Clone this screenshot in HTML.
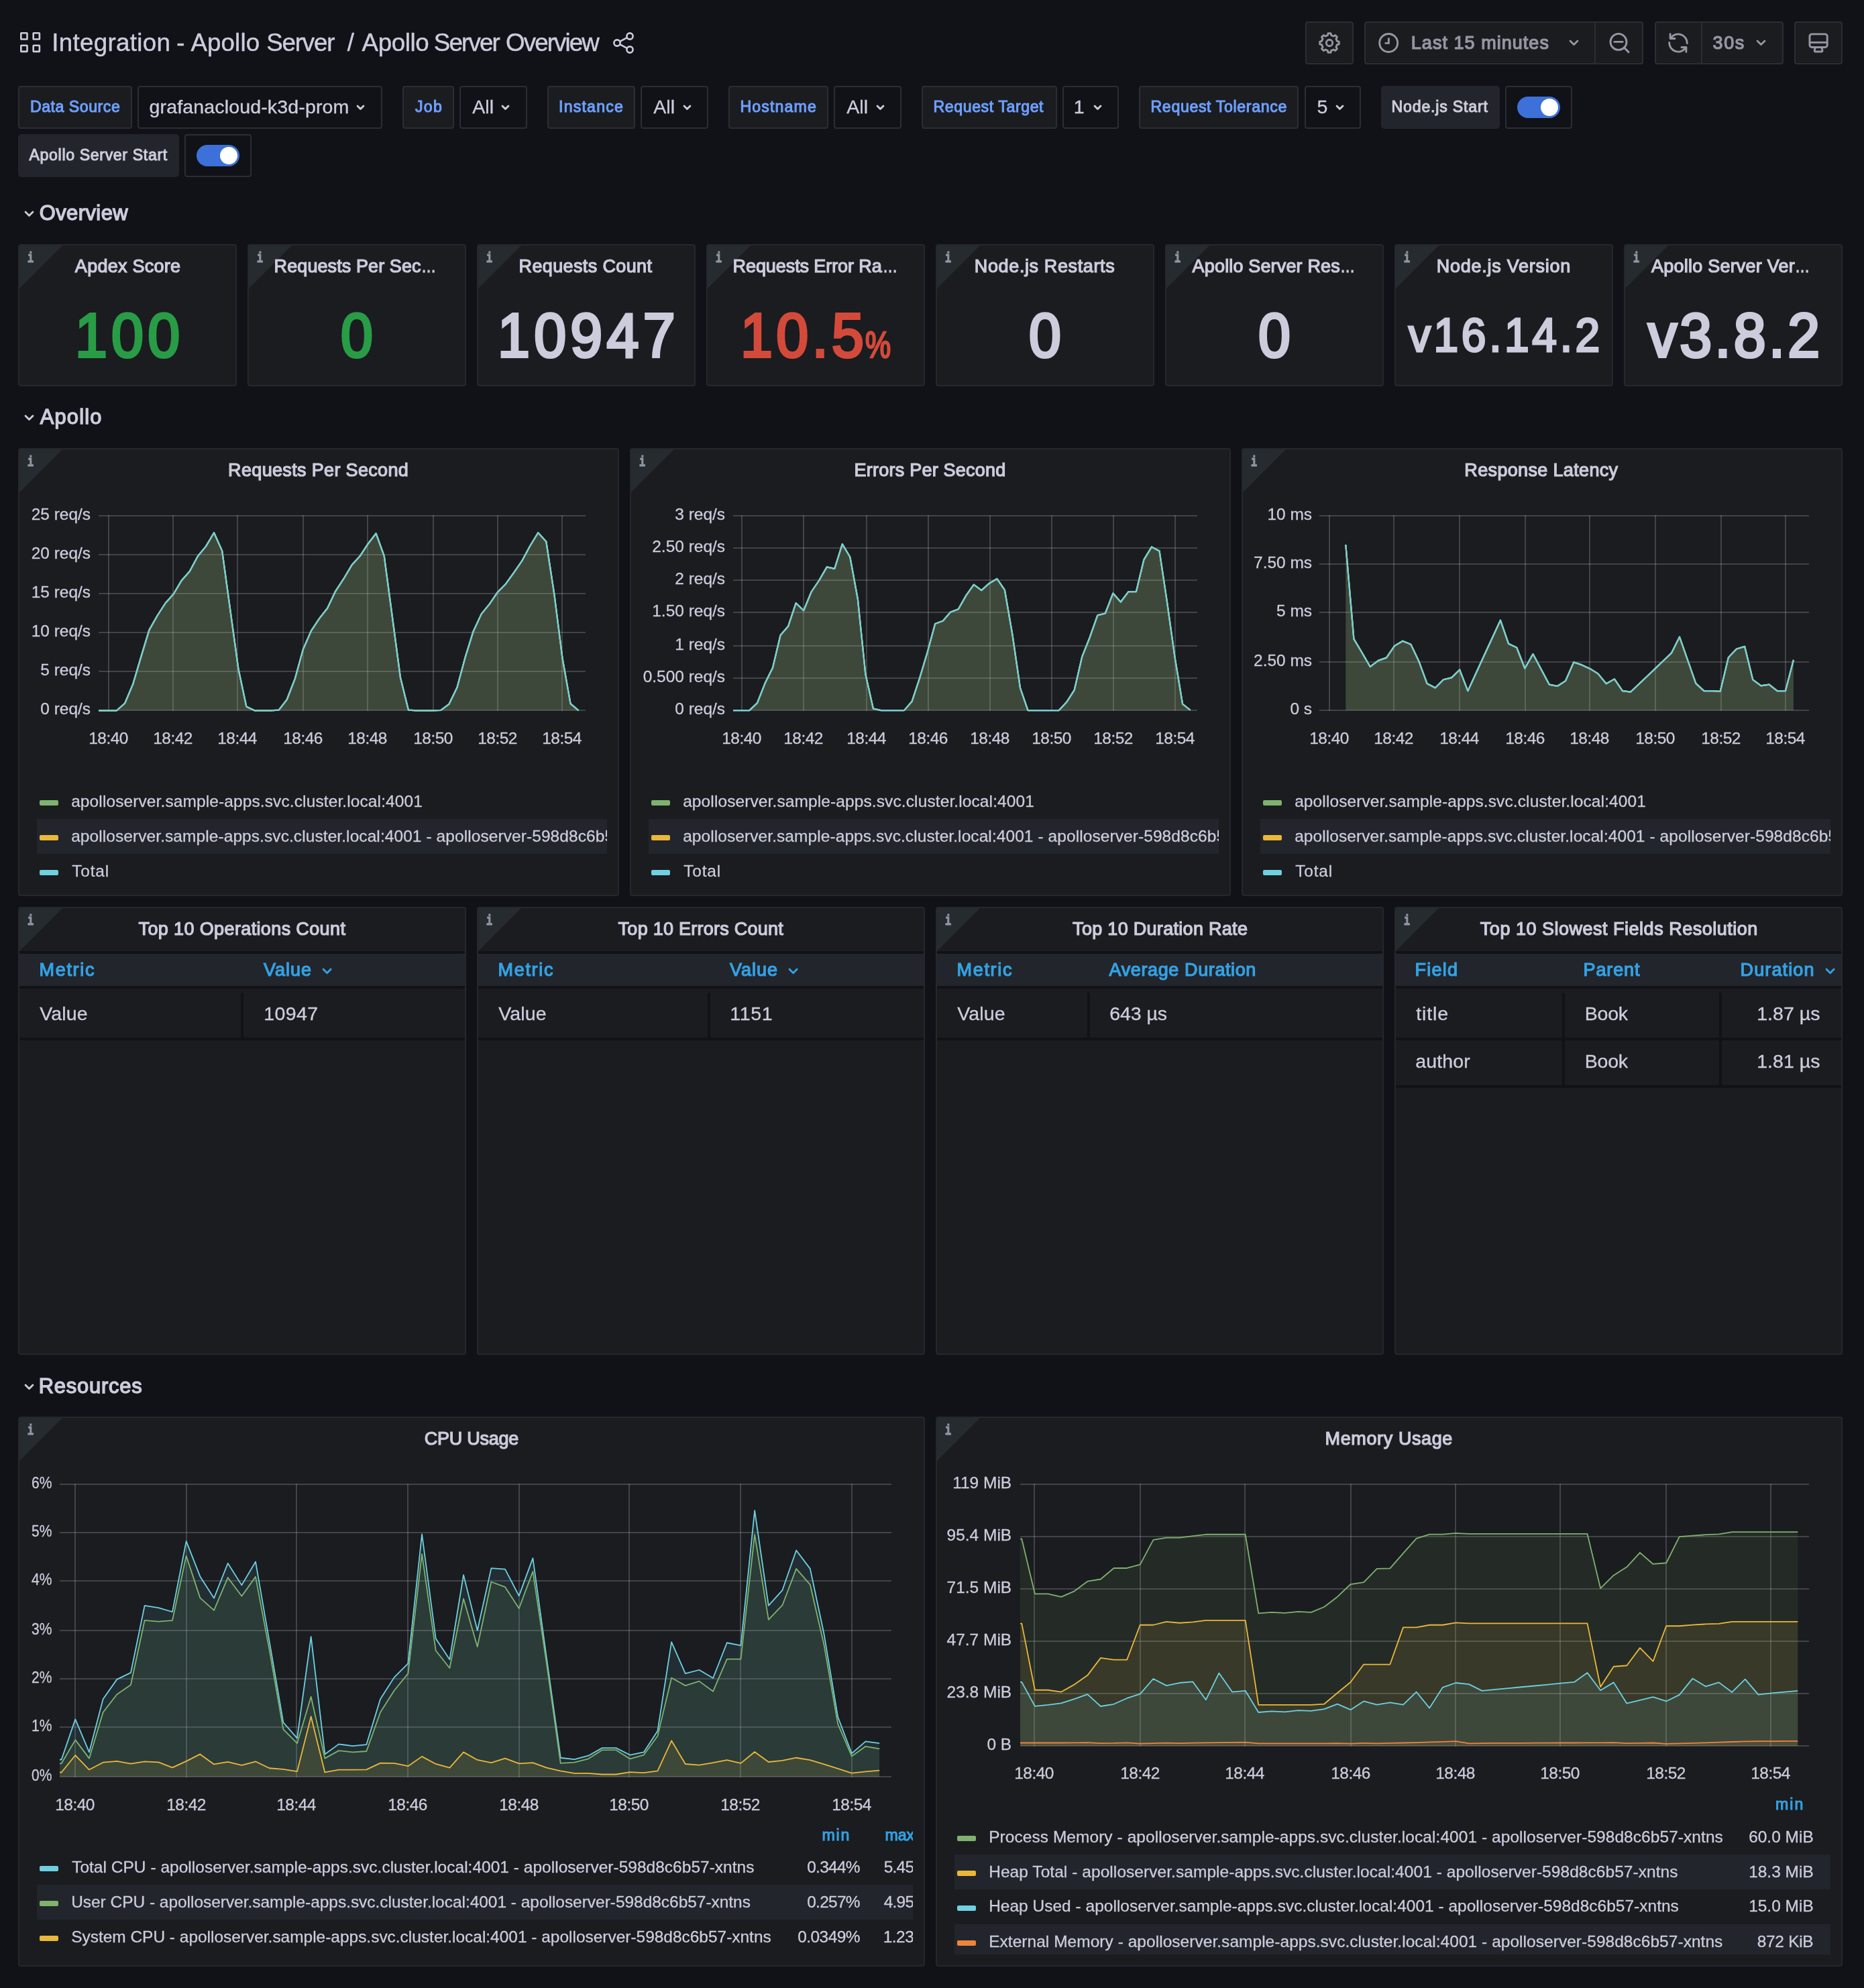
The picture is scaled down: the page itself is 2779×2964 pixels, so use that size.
<!DOCTYPE html><html lang="en"><head><meta charset="utf-8"><title>Apollo Server Overview - Grafana</title><style>

html,body{margin:0;padding:0;background:#111217;}
body{width:2779px;height:2964px;position:relative;overflow:hidden;font-family:"Liberation Sans", sans-serif;color:#ccccdc;will-change:transform;}
div,span,svg{position:absolute;box-sizing:border-box;}
.t{white-space:pre;line-height:1;}
.p{background:#1a1c20;border:2px solid #25272d;border-radius:4px;overflow:hidden;}
.corner{left:0;top:0;width:0;height:0;border-left:64px solid #262b30;border-bottom:64px solid transparent;}
.ic{overflow:visible;}
.clip{overflow:hidden;}

</style></head><body>
<header>
<svg class="ic" style="left:30px;top:48px" width="32" height="32" viewBox="0 0 32 32" ><rect x="1.3" y="1.3" width="9.2" height="9.2" rx="0.6" fill="none" stroke="#ccccdc" stroke-width="2.6"/><rect x="19.7" y="1.3" width="9.2" height="9.2" rx="0.6" fill="none" stroke="#ccccdc" stroke-width="2.6"/><rect x="1.3" y="19.7" width="9.2" height="9.2" rx="0.6" fill="none" stroke="#ccccdc" stroke-width="2.6"/><rect x="19.7" y="19.7" width="9.2" height="9.2" rx="0.6" fill="none" stroke="#ccccdc" stroke-width="2.6"/></svg>
<span class="t" style="left:77.22px;top:46.28px;font-size:36.72px;color:#ccccdc;-webkit-text-stroke:0.44px #ccccdc;letter-spacing:0.31px;">Integration </span>
<span class="t" style="left:263.3px;top:46.28px;font-size:36.72px;color:#ccccdc;-webkit-text-stroke:0.44px #ccccdc;">- </span>
<span class="t" style="left:284.42px;top:46.28px;font-size:36.72px;color:#ccccdc;-webkit-text-stroke:0.44px #ccccdc;letter-spacing:0.12px;">Apollo </span>
<span class="t" style="left:397.22px;top:46.28px;font-size:36.72px;color:#ccccdc;-webkit-text-stroke:0.44px #ccccdc;letter-spacing:-1.19px;">Server </span>
<span class="t" style="left:517.65px;top:46.28px;font-size:36.72px;color:#ccccdc;-webkit-text-stroke:0.44px #ccccdc;">/ </span>
<span class="t" style="left:539.62px;top:46.28px;font-size:36.72px;color:#ccccdc;-webkit-text-stroke:0.44px #ccccdc;letter-spacing:-0.42px;">Apollo </span>
<span class="t" style="left:646.82px;top:46.28px;font-size:36.72px;color:#ccccdc;-webkit-text-stroke:0.44px #ccccdc;letter-spacing:-1.85px;">Server </span>
<span class="t" style="left:754.12px;top:46.28px;font-size:36.72px;color:#ccccdc;-webkit-text-stroke:0.44px #ccccdc;letter-spacing:-1.91px;">Overview</span>
<svg class="ic" style="left:913px;top:47px" width="34" height="34" viewBox="0 0 34 34" ><g fill="none" stroke="#ccccdc" stroke-width="2.6"><circle cx="26" cy="7" r="4.6"/><circle cx="7" cy="17" r="4.6"/><circle cx="26" cy="27" r="4.6"/><path d="M11.2 14.9 L21.8 9.2 M11.2 19.1 L21.8 24.8"/></g></svg>
<div class="b" style="left:1946px;top:32px;width:72px;height:64px;background:#1a1c20;border:2px solid #2b2d34;border-radius:4px;"></div>
<div class="b" style="left:2034px;top:32px;width:416px;height:64px;background:#1a1c20;border:2px solid #2b2d34;border-radius:4px;"></div>
<div style="left:2377px;top:34px;width:2px;height:60px;background:#2b2d34;"></div>
<div class="b" style="left:2467px;top:32px;width:192px;height:64px;background:#1a1c20;border:2px solid #2b2d34;border-radius:4px;"></div>
<div style="left:2536px;top:34px;width:2px;height:60px;background:#2b2d34;"></div>
<div class="b" style="left:2675px;top:32px;width:72px;height:64px;background:#1a1c20;border:2px solid #2b2d34;border-radius:4px;"></div>
<svg class="ic" style="left:1962px;top:44px" width="40" height="40" viewBox="0 0 40 40" ><path d="M18.08 5.73 L21.92 5.73 L22.73 8.62 L26.11 10.02 L28.74 8.55 L31.45 11.26 L29.98 13.89 L31.38 17.27 L34.27 18.08 L34.27 21.92 L31.38 22.73 L29.98 26.11 L31.45 28.74 L28.74 31.45 L26.11 29.98 L22.73 31.38 L21.92 34.27 L18.08 34.27 L17.27 31.38 L13.89 29.98 L11.26 31.45 L8.55 28.74 L10.02 26.11 L8.62 22.73 L5.73 21.92 L5.73 18.08 L8.62 17.27 L10.02 13.89 L8.55 11.26 L11.26 8.55 L13.89 10.02 L17.27 8.62 Z" fill="none" stroke="#9697a3" stroke-width="2.9" stroke-linejoin="round"/><circle cx="20" cy="20" r="4.7" fill="none" stroke="#9697a3" stroke-width="2.9"/></svg>
<svg class="ic" style="left:2052px;top:46px" width="36" height="36" viewBox="0 0 36 36" ><circle cx="18.2" cy="18" r="13.5" fill="none" stroke="#9697a3" stroke-width="2.9"/><path d="M18.4 10.6 V18.4 H12.6" fill="none" stroke="#9697a3" stroke-width="2.9" stroke-linecap="butt" stroke-linejoin="miter"/></svg>
<span class="t" style="left:2103.81px;top:50.59px;font-size:27.02px;color:#9697a3;-webkit-text-stroke:1.22px #9697a3;letter-spacing:1.03px;">Last 15 minutes</span>
<svg class="ic" style="left:2338.5px;top:59.25px" width="15" height="9.5" viewBox="0 0 15 9.5" ><polyline points="2,2 7.5,7.5 13,2" fill="none" stroke="#9697a3" stroke-width="2.8" stroke-linecap="round" stroke-linejoin="round"/></svg>
<svg class="ic" style="left:2394px;top:46px" width="38" height="38" viewBox="0 0 38 38" ><g fill="none" stroke="#9697a3" stroke-width="2.9" stroke-linecap="round"><circle cx="19" cy="16.4" r="12"/><path d="M28 25.6 L34 31.6 M12.8 16.4 H25.2"/></g></svg>
<svg class="ic" style="left:2484px;top:46px" width="36" height="36" viewBox="0 0 36 36" ><g fill="none" stroke="#9697a3" stroke-width="2.9" stroke-linecap="round" stroke-linejoin="round"><path d="M7.2 10.4 A13.3 13.3 0 0 1 31.3 18.6"/><path d="M28.8 25.6 A13.3 13.3 0 0 1 4.7 17.4"/><path d="M6.1 4.6 V11.5 H13"/><path d="M29.9 31.4 V24.5 H23"/></g></svg>
<span class="t" style="left:2553.61px;top:50.59px;font-size:27.02px;color:#9697a3;-webkit-text-stroke:1.22px #9697a3;letter-spacing:1.52px;">30s</span>
<svg class="ic" style="left:2617.7px;top:59.45px" width="15" height="9.5" viewBox="0 0 15 9.5" ><polyline points="2,2 7.5,7.5 13,2" fill="none" stroke="#9697a3" stroke-width="2.8" stroke-linecap="round" stroke-linejoin="round"/></svg>
<svg class="ic" style="left:2692px;top:46px" width="38" height="38" viewBox="0 0 38 38" ><g fill="none" stroke="#9697a3" stroke-width="2.9" stroke-linejoin="round"><rect x="6" y="4.9" width="26.2" height="19.6" rx="3.2"/><path d="M6 17.3 H32.2"/><path d="M14.4 24.6 L13.2 29.4 Q13 31 14.6 31 H23.6 Q25.2 31 25 29.4 L23.8 24.6"/></g></svg>
</header>
<nav>
<div class="b" style="left:27px;top:128px;width:170px;height:64px;background:#1a1c20;border:2px solid #2b2d34;border-radius:4px;"></div>
<span class="t" style="left:44.92px;top:148.48px;font-size:23.16px;color:#6e9fff;-webkit-text-stroke:1.04px #6e9fff;letter-spacing:0.52px;">Data Source</span>
<div class="b" style="left:205px;top:128px;width:365px;height:64px;background:#111217;border:2px solid #2b2d34;border-radius:4px;"></div>
<span class="t" style="left:222.57px;top:144.83px;font-size:28.56px;color:#ccccdc;-webkit-text-stroke:0.34px #ccccdc;letter-spacing:0.13px;">grafanacloud-k3d-prom</span>
<svg class="ic" style="left:531.0px;top:156.39999999999998px" width="13" height="8.6" viewBox="0 0 13 8.6" ><polyline points="2,2 6.5,6.6 11,2" fill="none" stroke="#ccccdc" stroke-width="2.8" stroke-linecap="round" stroke-linejoin="round"/></svg>
<div class="b" style="left:600px;top:128px;width:77px;height:64px;background:#1a1c20;border:2px solid #2b2d34;border-radius:4px;"></div>
<span class="t" style="left:619.02px;top:148.48px;font-size:23.16px;color:#6e9fff;-webkit-text-stroke:1.04px #6e9fff;letter-spacing:1.25px;">Job</span>
<div class="b" style="left:685px;top:128px;width:101px;height:64px;background:#111217;border:2px solid #2b2d34;border-radius:4px;"></div>
<span class="t" style="left:704.17px;top:144.83px;font-size:28.56px;color:#ccccdc;-webkit-text-stroke:0.34px #ccccdc;letter-spacing:0.14px;">All</span>
<svg class="ic" style="left:747.2px;top:156.39999999999998px" width="13" height="8.6" viewBox="0 0 13 8.6" ><polyline points="2,2 6.5,6.6 11,2" fill="none" stroke="#ccccdc" stroke-width="2.8" stroke-linecap="round" stroke-linejoin="round"/></svg>
<div class="b" style="left:816px;top:128px;width:131px;height:64px;background:#1a1c20;border:2px solid #2b2d34;border-radius:4px;"></div>
<span class="t" style="left:833.02px;top:148.48px;font-size:23.16px;color:#6e9fff;-webkit-text-stroke:1.04px #6e9fff;letter-spacing:1.19px;">Instance</span>
<div class="b" style="left:955px;top:128px;width:101px;height:64px;background:#111217;border:2px solid #2b2d34;border-radius:4px;"></div>
<span class="t" style="left:974.17px;top:144.83px;font-size:28.56px;color:#ccccdc;-webkit-text-stroke:0.34px #ccccdc;letter-spacing:0.14px;">All</span>
<svg class="ic" style="left:1017.5px;top:156.39999999999998px" width="13" height="8.6" viewBox="0 0 13 8.6" ><polyline points="2,2 6.5,6.6 11,2" fill="none" stroke="#ccccdc" stroke-width="2.8" stroke-linecap="round" stroke-linejoin="round"/></svg>
<div class="b" style="left:1086px;top:128px;width:149px;height:64px;background:#1a1c20;border:2px solid #2b2d34;border-radius:4px;"></div>
<span class="t" style="left:1103.52px;top:148.48px;font-size:23.16px;color:#6e9fff;-webkit-text-stroke:1.04px #6e9fff;letter-spacing:1.11px;">Hostname</span>
<div class="b" style="left:1243px;top:128px;width:101px;height:64px;background:#111217;border:2px solid #2b2d34;border-radius:4px;"></div>
<span class="t" style="left:1262.17px;top:144.83px;font-size:28.56px;color:#ccccdc;-webkit-text-stroke:0.34px #ccccdc;letter-spacing:0.14px;">All</span>
<svg class="ic" style="left:1305.5px;top:156.39999999999998px" width="13" height="8.6" viewBox="0 0 13 8.6" ><polyline points="2,2 6.5,6.6 11,2" fill="none" stroke="#ccccdc" stroke-width="2.8" stroke-linecap="round" stroke-linejoin="round"/></svg>
<div class="b" style="left:1374px;top:128px;width:202px;height:64px;background:#1a1c20;border:2px solid #2b2d34;border-radius:4px;"></div>
<span class="t" style="left:1391.52px;top:148.48px;font-size:23.16px;color:#6e9fff;-webkit-text-stroke:1.04px #6e9fff;letter-spacing:0.57px;">Request Target</span>
<div class="b" style="left:1584px;top:128px;width:84px;height:64px;background:#111217;border:2px solid #2b2d34;border-radius:4px;"></div>
<span class="t" style="left:1600.75px;top:144.83px;font-size:28.56px;color:#ccccdc;-webkit-text-stroke:0.34px #ccccdc;">1</span>
<svg class="ic" style="left:1629.7px;top:156.39999999999998px" width="13" height="8.6" viewBox="0 0 13 8.6" ><polyline points="2,2 6.5,6.6 11,2" fill="none" stroke="#ccccdc" stroke-width="2.8" stroke-linecap="round" stroke-linejoin="round"/></svg>
<div class="b" style="left:1698px;top:128px;width:238px;height:64px;background:#1a1c20;border:2px solid #2b2d34;border-radius:4px;"></div>
<span class="t" style="left:1715.52px;top:148.48px;font-size:23.16px;color:#6e9fff;-webkit-text-stroke:1.04px #6e9fff;letter-spacing:0.63px;">Request Tolerance</span>
<div class="b" style="left:1945px;top:128px;width:84px;height:64px;background:#111217;border:2px solid #2b2d34;border-radius:4px;"></div>
<span class="t" style="left:1963.5px;top:144.83px;font-size:28.56px;color:#ccccdc;-webkit-text-stroke:0.34px #ccccdc;">5</span>
<svg class="ic" style="left:1990.5px;top:156.39999999999998px" width="13" height="8.6" viewBox="0 0 13 8.6" ><polyline points="2,2 6.5,6.6 11,2" fill="none" stroke="#ccccdc" stroke-width="2.8" stroke-linecap="round" stroke-linejoin="round"/></svg>
<div class="b" style="left:2059px;top:128px;width:177px;height:64px;background:#22252b;border-radius:5px;"></div>
<span class="t" style="left:2074.52px;top:148.48px;font-size:23.16px;color:#ccccdc;-webkit-text-stroke:1.04px #ccccdc;letter-spacing:0.8px;">Node.js Start</span>
<div class="b" style="left:2244px;top:128px;width:100px;height:64px;background:#111217;border:2px solid #2b2d34;border-radius:4px;"></div>
<div style="left:2262px;top:144px;width:64px;height:32px;background:#3d71d9;border-radius:16px;"></div>
<div style="left:2297px;top:147px;width:26px;height:26px;background:#ffffff;border-radius:13px;"></div>
<div class="b" style="left:27px;top:200px;width:240px;height:64px;background:#22252b;border-radius:5px;"></div>
<span class="t" style="left:43.52px;top:220.48px;font-size:23.16px;color:#ccccdc;-webkit-text-stroke:1.04px #ccccdc;letter-spacing:0.63px;">Apollo Server Start</span>
<div class="b" style="left:275px;top:200px;width:100px;height:64px;background:#111217;border:2px solid #2b2d34;border-radius:4px;"></div>
<div style="left:293px;top:216px;width:64px;height:32px;background:#3d71d9;border-radius:16px;"></div>
<div style="left:328px;top:219px;width:26px;height:26px;background:#ffffff;border-radius:13px;"></div>
</nav>
<main>
<svg class="ic" style="left:35.5px;top:314.4px" width="15" height="9.6" viewBox="0 0 15 9.6" ><polyline points="2,2 7.5,7.6 13,2" fill="none" stroke="#ccccdc" stroke-width="2.8" stroke-linecap="round" stroke-linejoin="round"/></svg>
<span class="t" style="left:58.69px;top:303.31px;font-size:30.88px;color:#ccccdc;-webkit-text-stroke:1.39px #ccccdc;letter-spacing:0.46px;">Overview</span>
<svg class="ic" style="left:35.5px;top:618.4000000000001px" width="15" height="9.6" viewBox="0 0 15 9.6" ><polyline points="2,2 7.5,7.6 13,2" fill="none" stroke="#ccccdc" stroke-width="2.8" stroke-linecap="round" stroke-linejoin="round"/></svg>
<span class="t" style="left:59.69px;top:607.31px;font-size:30.88px;color:#ccccdc;-webkit-text-stroke:1.39px #ccccdc;letter-spacing:1.19px;">Apollo</span>
<svg class="ic" style="left:35.5px;top:2062.8999999999996px" width="15" height="9.6" viewBox="0 0 15 9.6" ><polyline points="2,2 7.5,7.6 13,2" fill="none" stroke="#ccccdc" stroke-width="2.8" stroke-linecap="round" stroke-linejoin="round"/></svg>
<span class="t" style="left:57.69px;top:2051.81px;font-size:30.88px;color:#ccccdc;-webkit-text-stroke:1.39px #ccccdc;letter-spacing:0.81px;">Resources</span>
<section>
<div class="p" style="left:27px;top:364px;width:326px;height:212px"><div class="corner"></div></div>
<span class="t" style="left:40.92px;top:375.4px;font-size:21.73px;color:#9596a4;font-family:'Liberation Mono', monospace;font-weight:700;-webkit-text-stroke:1.19px #9596a4;transform:scaleX(0.7);transform-origin:0 0;">i</span>
<span class="t" style="left:111.86px;top:383.99px;font-size:27.02px;color:#ccccdc;-webkit-text-stroke:1.22px #ccccdc;letter-spacing:0.26px;">Apdex Score</span>
<span class="t" style="left:111.53px;top:453.92px;font-size:92.64px;color:#299c46;-webkit-text-stroke:4.17px #299c46;transform:scaleX(0.93);transform-origin:0 0;letter-spacing:6.65px;">100</span>
</section>
<section>
<div class="p" style="left:369px;top:364px;width:326px;height:212px"><div class="corner"></div></div>
<span class="t" style="left:382.92px;top:375.4px;font-size:21.73px;color:#9596a4;font-family:'Liberation Mono', monospace;font-weight:700;-webkit-text-stroke:1.19px #9596a4;transform:scaleX(0.7);transform-origin:0 0;">i</span>
<span class="t" style="left:408.61px;top:383.99px;font-size:27.02px;color:#ccccdc;-webkit-text-stroke:1.22px #ccccdc;letter-spacing:0.08px;">Requests Per Sec</span><span class="t" style="left:627.58px;top:383.99px;font-size:27.02px;color:#ccccdc;-webkit-text-stroke:1.22px #ccccdc;transform:scaleX(0.82);transform-origin:0 0;">…</span>
<span class="t" style="left:507.88px;top:453.92px;font-size:92.64px;color:#299c46;-webkit-text-stroke:4.17px #299c46;transform:scaleX(0.93);transform-origin:0 0;">0</span>
</section>
<section>
<div class="p" style="left:711px;top:364px;width:326px;height:212px"><div class="corner"></div></div>
<span class="t" style="left:724.92px;top:375.4px;font-size:21.73px;color:#9596a4;font-family:'Liberation Mono', monospace;font-weight:700;-webkit-text-stroke:1.19px #9596a4;transform:scaleX(0.7);transform-origin:0 0;">i</span>
<span class="t" style="left:773.61px;top:383.99px;font-size:27.02px;color:#ccccdc;-webkit-text-stroke:1.22px #ccccdc;letter-spacing:0.35px;">Requests Count</span>
<span class="t" style="left:742.03px;top:453.92px;font-size:92.64px;color:#ccccdc;-webkit-text-stroke:4.17px #ccccdc;transform:scaleX(0.93);transform-origin:0 0;letter-spacing:6.75px;">10947</span>
</section>
<section>
<div class="p" style="left:1053px;top:364px;width:326px;height:212px"><div class="corner"></div></div>
<span class="t" style="left:1066.92px;top:375.4px;font-size:21.73px;color:#9596a4;font-family:'Liberation Mono', monospace;font-weight:700;-webkit-text-stroke:1.19px #9596a4;transform:scaleX(0.7);transform-origin:0 0;">i</span>
<span class="t" style="left:1092.61px;top:383.99px;font-size:27.02px;color:#ccccdc;-webkit-text-stroke:1.22px #ccccdc;letter-spacing:-0.1px;">Requests Error Ra</span><span class="t" style="left:1316.18px;top:383.99px;font-size:27.02px;color:#ccccdc;-webkit-text-stroke:1.22px #ccccdc;transform:scaleX(0.82);transform-origin:0 0;">…</span>
<span class="t" style="left:1103.63px;top:453.92px;font-size:92.64px;color:#d44a3a;-webkit-text-stroke:4.17px #d44a3a;transform:scaleX(0.93);transform-origin:0 0;letter-spacing:5.82px;">10.5</span><span class="t" style="left:1290.13px;top:486.76px;font-size:55px;color:#d44a3a;-webkit-text-stroke:2.48px #d44a3a;transform:scaleX(0.78);transform-origin:0 0;">%</span>
</section>
<section>
<div class="p" style="left:1395px;top:364px;width:326px;height:212px"><div class="corner"></div></div>
<span class="t" style="left:1408.92px;top:375.4px;font-size:21.73px;color:#9596a4;font-family:'Liberation Mono', monospace;font-weight:700;-webkit-text-stroke:1.19px #9596a4;transform:scaleX(0.7);transform-origin:0 0;">i</span>
<span class="t" style="left:1452.86px;top:383.99px;font-size:27.02px;color:#ccccdc;-webkit-text-stroke:1.22px #ccccdc;letter-spacing:0.61px;">Node.js Restarts</span>
<span class="t" style="left:1533.79px;top:453.92px;font-size:92.64px;color:#ccccdc;-webkit-text-stroke:4.17px #ccccdc;transform:scaleX(0.93);transform-origin:0 0;">0</span>
</section>
<section>
<div class="p" style="left:1737px;top:364px;width:326px;height:212px"><div class="corner"></div></div>
<span class="t" style="left:1750.92px;top:375.4px;font-size:21.73px;color:#9596a4;font-family:'Liberation Mono', monospace;font-weight:700;-webkit-text-stroke:1.19px #9596a4;transform:scaleX(0.7);transform-origin:0 0;">i</span>
<span class="t" style="left:1777.61px;top:383.99px;font-size:27.02px;color:#ccccdc;-webkit-text-stroke:1.22px #ccccdc;letter-spacing:0.15px;">Apollo Server Res</span><span class="t" style="left:1997.68px;top:383.99px;font-size:27.02px;color:#ccccdc;-webkit-text-stroke:1.22px #ccccdc;transform:scaleX(0.82);transform-origin:0 0;">…</span>
<span class="t" style="left:1875.79px;top:453.92px;font-size:92.64px;color:#ccccdc;-webkit-text-stroke:4.17px #ccccdc;transform:scaleX(0.93);transform-origin:0 0;">0</span>
</section>
<section>
<div class="p" style="left:2079px;top:364px;width:326px;height:212px"><div class="corner"></div></div>
<span class="t" style="left:2092.92px;top:375.4px;font-size:21.73px;color:#9596a4;font-family:'Liberation Mono', monospace;font-weight:700;-webkit-text-stroke:1.19px #9596a4;transform:scaleX(0.7);transform-origin:0 0;">i</span>
<span class="t" style="left:2141.86px;top:383.99px;font-size:27.02px;color:#ccccdc;-webkit-text-stroke:1.22px #ccccdc;letter-spacing:0.72px;">Node.js Version</span>
<span class="t" style="left:2100.08px;top:465.2px;font-size:70.93px;color:#ccccdc;-webkit-text-stroke:3.19px #ccccdc;transform:scaleX(0.93);transform-origin:0 0;letter-spacing:4.95px;">v16.14.2</span>
</section>
<section>
<div class="p" style="left:2421px;top:364px;width:326px;height:212px"><div class="corner"></div></div>
<span class="t" style="left:2434.92px;top:375.4px;font-size:21.73px;color:#9596a4;font-family:'Liberation Mono', monospace;font-weight:700;-webkit-text-stroke:1.19px #9596a4;transform:scaleX(0.7);transform-origin:0 0;">i</span>
<span class="t" style="left:2462.11px;top:383.99px;font-size:27.02px;color:#ccccdc;-webkit-text-stroke:1.22px #ccccdc;letter-spacing:0.21px;">Apollo Server Ver</span><span class="t" style="left:2676.18px;top:383.99px;font-size:27.02px;color:#ccccdc;-webkit-text-stroke:1.22px #ccccdc;transform:scaleX(0.82);transform-origin:0 0;">…</span>
<span class="t" style="left:2456.94px;top:453.92px;font-size:92.64px;color:#ccccdc;-webkit-text-stroke:4.17px #ccccdc;transform:scaleX(0.93);transform-origin:0 0;letter-spacing:4.62px;">v3.8.2</span>
</section>
<section>
<div class="p" style="left:27px;top:668px;width:896px;height:668px"><div class="corner"></div></div>
<span class="t" style="left:40.92px;top:679.4px;font-size:21.73px;color:#9596a4;font-family:'Liberation Mono', monospace;font-weight:700;-webkit-text-stroke:1.19px #9596a4;transform:scaleX(0.7);transform-origin:0 0;">i</span>
<span class="t" style="left:340.11px;top:687.99px;font-size:27.02px;color:#ccccdc;-webkit-text-stroke:1.22px #ccccdc;letter-spacing:0.33px;">Requests Per Second</span>
<svg class="ic" style="left:147px;top:768px" width="726" height="294" viewBox="0 0 726 294"><rect x="14" y="0" width="2" height="292" fill="rgba(200,200,205,0.23)"/><rect x="110" y="0" width="2" height="292" fill="rgba(200,200,205,0.23)"/><rect x="206" y="0" width="2" height="292" fill="rgba(200,200,205,0.23)"/><rect x="304" y="0" width="2" height="292" fill="rgba(200,200,205,0.23)"/><rect x="400" y="0" width="2" height="292" fill="rgba(200,200,205,0.23)"/><rect x="498" y="0" width="2" height="292" fill="rgba(200,200,205,0.23)"/><rect x="594" y="0" width="2" height="292" fill="rgba(200,200,205,0.23)"/><rect x="690" y="0" width="2" height="292" fill="rgba(200,200,205,0.23)"/><rect x="0" y="0" width="726" height="2" fill="rgba(200,200,205,0.23)"/><rect x="0" y="58" width="726" height="2" fill="rgba(200,200,205,0.23)"/><rect x="0" y="116" width="726" height="2" fill="rgba(200,200,205,0.23)"/><rect x="0" y="174" width="726" height="2" fill="rgba(200,200,205,0.23)"/><rect x="0" y="232" width="726" height="2" fill="rgba(200,200,205,0.23)"/><rect x="0" y="290" width="726" height="2" fill="rgba(200,200,205,0.23)"/><polygon points="0,291 0,291.29 2.92,291.29 15,291.29 27.08,291.29 39.16,280.48 51.24,251.94 63.32,211.16 75.4,171.41 87.48,150 99.56,131.25 111.64,117.79 123.72,97.4 135.8,83.74 147.88,61.32 159.96,46.64 172.04,26.25 184.12,53.16 196.2,140.83 208.28,228.49 220.36,285.58 232.44,291.29 244.52,291.29 256.6,291.29 268.68,290.67 280.76,274.98 292.84,243.78 304.92,199.95 317,172.43 329.08,154.08 341.16,138.79 353.24,113.3 365.32,94.96 377.4,74.57 389.48,61.32 401.56,42.97 413.64,27.27 425.72,60.91 437.8,151.02 449.88,241.75 461.96,290.67 474.04,291.29 486.12,291.29 498.2,291.29 510.28,290.88 522.36,281.91 534.44,257.04 546.52,212.18 558.6,173.45 570.68,147.35 582.76,132.67 594.84,114.94 606.92,102.7 619,85.78 631.08,68.45 643.16,46.03 655.24,26.25 667.32,39.5 679.4,118.4 691.48,213.2 703.56,281.09 715.64,291.29 715.64,291" fill="#7eb26d" fill-opacity="0.1"/><polygon points="0,291 0,291.29 2.92,291.29 15,291.29 27.08,291.29 39.16,280.48 51.24,251.94 63.32,211.16 75.4,171.41 87.48,150 99.56,131.25 111.64,117.79 123.72,97.4 135.8,83.74 147.88,61.32 159.96,46.64 172.04,26.25 184.12,53.16 196.2,140.83 208.28,228.49 220.36,285.58 232.44,291.29 244.52,291.29 256.6,291.29 268.68,290.67 280.76,274.98 292.84,243.78 304.92,199.95 317,172.43 329.08,154.08 341.16,138.79 353.24,113.3 365.32,94.96 377.4,74.57 389.48,61.32 401.56,42.97 413.64,27.27 425.72,60.91 437.8,151.02 449.88,241.75 461.96,290.67 474.04,291.29 486.12,291.29 498.2,291.29 510.28,290.88 522.36,281.91 534.44,257.04 546.52,212.18 558.6,173.45 570.68,147.35 582.76,132.67 594.84,114.94 606.92,102.7 619,85.78 631.08,68.45 643.16,46.03 655.24,26.25 667.32,39.5 679.4,118.4 691.48,213.2 703.56,281.09 715.64,291.29 715.64,291" fill="#eab839" fill-opacity="0.1"/><polygon points="0,291 0,291.29 2.92,291.29 15,291.29 27.08,291.29 39.16,280.48 51.24,251.94 63.32,211.16 75.4,171.41 87.48,150 99.56,131.25 111.64,117.79 123.72,97.4 135.8,83.74 147.88,61.32 159.96,46.64 172.04,26.25 184.12,53.16 196.2,140.83 208.28,228.49 220.36,285.58 232.44,291.29 244.52,291.29 256.6,291.29 268.68,290.67 280.76,274.98 292.84,243.78 304.92,199.95 317,172.43 329.08,154.08 341.16,138.79 353.24,113.3 365.32,94.96 377.4,74.57 389.48,61.32 401.56,42.97 413.64,27.27 425.72,60.91 437.8,151.02 449.88,241.75 461.96,290.67 474.04,291.29 486.12,291.29 498.2,291.29 510.28,290.88 522.36,281.91 534.44,257.04 546.52,212.18 558.6,173.45 570.68,147.35 582.76,132.67 594.84,114.94 606.92,102.7 619,85.78 631.08,68.45 643.16,46.03 655.24,26.25 667.32,39.5 679.4,118.4 691.48,213.2 703.56,281.09 715.64,291.29 715.64,291" fill="#6ed0e0" fill-opacity="0.1"/><polyline points="0,291.29 2.92,291.29 15,291.29 27.08,291.29 39.16,280.48 51.24,251.94 63.32,211.16 75.4,171.41 87.48,150 99.56,131.25 111.64,117.79 123.72,97.4 135.8,83.74 147.88,61.32 159.96,46.64 172.04,26.25 184.12,53.16 196.2,140.83 208.28,228.49 220.36,285.58 232.44,291.29 244.52,291.29 256.6,291.29 268.68,290.67 280.76,274.98 292.84,243.78 304.92,199.95 317,172.43 329.08,154.08 341.16,138.79 353.24,113.3 365.32,94.96 377.4,74.57 389.48,61.32 401.56,42.97 413.64,27.27 425.72,60.91 437.8,151.02 449.88,241.75 461.96,290.67 474.04,291.29 486.12,291.29 498.2,291.29 510.28,290.88 522.36,281.91 534.44,257.04 546.52,212.18 558.6,173.45 570.68,147.35 582.76,132.67 594.84,114.94 606.92,102.7 619,85.78 631.08,68.45 643.16,46.03 655.24,26.25 667.32,39.5 679.4,118.4 691.48,213.2 703.56,281.09 715.64,291.29" fill="none" stroke="#7eb26d" stroke-width="2.2" stroke-linejoin="round"/><polyline points="0,291.29 2.92,291.29 15,291.29 27.08,291.29 39.16,280.48 51.24,251.94 63.32,211.16 75.4,171.41 87.48,150 99.56,131.25 111.64,117.79 123.72,97.4 135.8,83.74 147.88,61.32 159.96,46.64 172.04,26.25 184.12,53.16 196.2,140.83 208.28,228.49 220.36,285.58 232.44,291.29 244.52,291.29 256.6,291.29 268.68,290.67 280.76,274.98 292.84,243.78 304.92,199.95 317,172.43 329.08,154.08 341.16,138.79 353.24,113.3 365.32,94.96 377.4,74.57 389.48,61.32 401.56,42.97 413.64,27.27 425.72,60.91 437.8,151.02 449.88,241.75 461.96,290.67 474.04,291.29 486.12,291.29 498.2,291.29 510.28,290.88 522.36,281.91 534.44,257.04 546.52,212.18 558.6,173.45 570.68,147.35 582.76,132.67 594.84,114.94 606.92,102.7 619,85.78 631.08,68.45 643.16,46.03 655.24,26.25 667.32,39.5 679.4,118.4 691.48,213.2 703.56,281.09 715.64,291.29" fill="none" stroke="#eab839" stroke-width="2.2" stroke-linejoin="round"/><polyline points="0,291.29 2.92,291.29 15,291.29 27.08,291.29 39.16,280.48 51.24,251.94 63.32,211.16 75.4,171.41 87.48,150 99.56,131.25 111.64,117.79 123.72,97.4 135.8,83.74 147.88,61.32 159.96,46.64 172.04,26.25 184.12,53.16 196.2,140.83 208.28,228.49 220.36,285.58 232.44,291.29 244.52,291.29 256.6,291.29 268.68,290.67 280.76,274.98 292.84,243.78 304.92,199.95 317,172.43 329.08,154.08 341.16,138.79 353.24,113.3 365.32,94.96 377.4,74.57 389.48,61.32 401.56,42.97 413.64,27.27 425.72,60.91 437.8,151.02 449.88,241.75 461.96,290.67 474.04,291.29 486.12,291.29 498.2,291.29 510.28,290.88 522.36,281.91 534.44,257.04 546.52,212.18 558.6,173.45 570.68,147.35 582.76,132.67 594.84,114.94 606.92,102.7 619,85.78 631.08,68.45 643.16,46.03 655.24,26.25 667.32,39.5 679.4,118.4 691.48,213.2 703.56,281.09 715.64,291.29" fill="none" stroke="#6ed0e0" stroke-width="2.2" stroke-linejoin="round"/></svg>
<span class="t" style="left:46.68px;top:754.65px;font-size:24.48px;color:#ccccdc;-webkit-text-stroke:0.29px #ccccdc;">25 req/s</span>
<span class="t" style="left:46.68px;top:812.65px;font-size:24.48px;color:#ccccdc;-webkit-text-stroke:0.29px #ccccdc;">20 req/s</span>
<span class="t" style="left:46.68px;top:870.65px;font-size:24.48px;color:#ccccdc;-webkit-text-stroke:0.29px #ccccdc;">15 req/s</span>
<span class="t" style="left:46.68px;top:928.65px;font-size:24.48px;color:#ccccdc;-webkit-text-stroke:0.29px #ccccdc;">10 req/s</span>
<span class="t" style="left:60.28px;top:986.65px;font-size:24.48px;color:#ccccdc;-webkit-text-stroke:0.29px #ccccdc;">5 req/s</span>
<span class="t" style="left:60.28px;top:1044.65px;font-size:24.48px;color:#ccccdc;-webkit-text-stroke:0.29px #ccccdc;">0 req/s</span>
<span class="t" style="left:132.15px;top:1088.85px;font-size:24.48px;color:#ccccdc;-webkit-text-stroke:0.29px #ccccdc;letter-spacing:-0.48px;">18:40</span>
<span class="t" style="left:228.15px;top:1088.85px;font-size:24.48px;color:#ccccdc;-webkit-text-stroke:0.29px #ccccdc;letter-spacing:-0.48px;">18:42</span>
<span class="t" style="left:324.15px;top:1088.85px;font-size:24.48px;color:#ccccdc;-webkit-text-stroke:0.29px #ccccdc;letter-spacing:-0.48px;">18:44</span>
<span class="t" style="left:422.15px;top:1088.85px;font-size:24.48px;color:#ccccdc;-webkit-text-stroke:0.29px #ccccdc;letter-spacing:-0.48px;">18:46</span>
<span class="t" style="left:518.15px;top:1088.85px;font-size:24.48px;color:#ccccdc;-webkit-text-stroke:0.29px #ccccdc;letter-spacing:-0.48px;">18:48</span>
<span class="t" style="left:616.15px;top:1088.85px;font-size:24.48px;color:#ccccdc;-webkit-text-stroke:0.29px #ccccdc;letter-spacing:-0.48px;">18:50</span>
<span class="t" style="left:712.15px;top:1088.85px;font-size:24.48px;color:#ccccdc;-webkit-text-stroke:0.29px #ccccdc;letter-spacing:-0.48px;">18:52</span>
<span class="t" style="left:808.15px;top:1088.85px;font-size:24.48px;color:#ccccdc;-webkit-text-stroke:0.29px #ccccdc;letter-spacing:-0.48px;">18:54</span>
<div style="left:59px;top:1192.8px;width:28px;height:8px;background:#7eb26d;border-radius:2px;"></div>
<span class="t" style="left:106.15px;top:1182.55px;font-size:24.48px;color:#ccccdc;-webkit-text-stroke:0.29px #ccccdc;letter-spacing:0.12px;">apolloserver.sample-apps.svc.cluster.local:4001</span>
<div style="left:55px;top:1221.2px;width:850px;height:52px;background:#22252b;"></div>
<div style="left:59px;top:1244.8px;width:28px;height:8px;background:#eab839;border-radius:2px;"></div>
<div class="clip" style="left:105px;top:1230.55px;width:800px;height:33.6px"><span class="t" style="left:1.15px;top:4px;font-size:24.48px;color:#ccccdc;-webkit-text-stroke:0.29px #ccccdc;letter-spacing:0.09px;">apolloserver.sample-apps.svc.cluster.local:4001 - apolloserver-598d8c6b57-xntns</span></div>
<div style="left:59px;top:1296.8px;width:28px;height:8px;background:#6ed0e0;border-radius:2px;"></div>
<span class="t" style="left:107.15px;top:1286.55px;font-size:24.48px;color:#ccccdc;-webkit-text-stroke:0.29px #ccccdc;letter-spacing:0.86px;">Total</span>
</section>
<section>
<div class="p" style="left:939px;top:668px;width:896px;height:668px"><div class="corner"></div></div>
<span class="t" style="left:952.92px;top:679.4px;font-size:21.73px;color:#9596a4;font-family:'Liberation Mono', monospace;font-weight:700;-webkit-text-stroke:1.19px #9596a4;transform:scaleX(0.7);transform-origin:0 0;">i</span>
<span class="t" style="left:1273.61px;top:687.99px;font-size:27.02px;color:#ccccdc;-webkit-text-stroke:1.22px #ccccdc;letter-spacing:0.22px;">Errors Per Second</span>
<svg class="ic" style="left:1093px;top:768px" width="692" height="294" viewBox="0 0 692 294"><rect x="12" y="0" width="2" height="292" fill="rgba(200,200,205,0.23)"/><rect x="104" y="0" width="2" height="292" fill="rgba(200,200,205,0.23)"/><rect x="198" y="0" width="2" height="292" fill="rgba(200,200,205,0.23)"/><rect x="290" y="0" width="2" height="292" fill="rgba(200,200,205,0.23)"/><rect x="382" y="0" width="2" height="292" fill="rgba(200,200,205,0.23)"/><rect x="474" y="0" width="2" height="292" fill="rgba(200,200,205,0.23)"/><rect x="566" y="0" width="2" height="292" fill="rgba(200,200,205,0.23)"/><rect x="658" y="0" width="2" height="292" fill="rgba(200,200,205,0.23)"/><rect x="0" y="0" width="692" height="2" fill="rgba(200,200,205,0.23)"/><rect x="0" y="48" width="692" height="2" fill="rgba(200,200,205,0.23)"/><rect x="0" y="96" width="692" height="2" fill="rgba(200,200,205,0.23)"/><rect x="0" y="144" width="692" height="2" fill="rgba(200,200,205,0.23)"/><rect x="0" y="194" width="692" height="2" fill="rgba(200,200,205,0.23)"/><rect x="0" y="242" width="692" height="2" fill="rgba(200,200,205,0.23)"/><rect x="0" y="290" width="692" height="2" fill="rgba(200,200,205,0.23)"/><polygon points="0,291 0,291.15 1.37,291.15 12.9,291.15 24.43,291.15 35.96,280.14 47.49,250.79 59.02,227.61 70.55,178.94 82.08,165.81 93.61,131.05 105.14,142.25 116.67,114.25 128.2,97.25 139.73,77.36 151.26,79.87 162.79,43.18 174.32,62.49 185.85,125.26 197.38,237.27 208.91,288.45 220.44,291.15 231.97,291.15 243.5,291.15 255.03,291.15 266.56,277.82 278.09,243.06 289.62,204.44 301.15,161.95 312.68,157.7 324.21,144.57 335.74,140.32 347.27,119.85 358.8,103.63 370.33,112.12 381.86,101.69 393.39,94.94 404.92,111.74 416.45,178.37 427.98,257.55 439.51,291.15 451.04,291.15 462.57,291.15 474.1,291.15 485.63,291.15 497.16,278.79 508.69,260.83 520.22,211.2 531.75,182.23 543.28,149.4 554.81,146.5 566.34,116.57 577.87,129.5 589.4,114.05 600.93,114.05 612.46,66.35 623.99,47.43 635.52,53.41 647.05,130.08 658.58,212.16 670.11,281.69 681.64,290.76 681.64,291" fill="#7eb26d" fill-opacity="0.1"/><polygon points="0,291 0,291.15 1.37,291.15 12.9,291.15 24.43,291.15 35.96,280.14 47.49,250.79 59.02,227.61 70.55,178.94 82.08,165.81 93.61,131.05 105.14,142.25 116.67,114.25 128.2,97.25 139.73,77.36 151.26,79.87 162.79,43.18 174.32,62.49 185.85,125.26 197.38,237.27 208.91,288.45 220.44,291.15 231.97,291.15 243.5,291.15 255.03,291.15 266.56,277.82 278.09,243.06 289.62,204.44 301.15,161.95 312.68,157.7 324.21,144.57 335.74,140.32 347.27,119.85 358.8,103.63 370.33,112.12 381.86,101.69 393.39,94.94 404.92,111.74 416.45,178.37 427.98,257.55 439.51,291.15 451.04,291.15 462.57,291.15 474.1,291.15 485.63,291.15 497.16,278.79 508.69,260.83 520.22,211.2 531.75,182.23 543.28,149.4 554.81,146.5 566.34,116.57 577.87,129.5 589.4,114.05 600.93,114.05 612.46,66.35 623.99,47.43 635.52,53.41 647.05,130.08 658.58,212.16 670.11,281.69 681.64,290.76 681.64,291" fill="#eab839" fill-opacity="0.1"/><polygon points="0,291 0,291.15 1.37,291.15 12.9,291.15 24.43,291.15 35.96,280.14 47.49,250.79 59.02,227.61 70.55,178.94 82.08,165.81 93.61,131.05 105.14,142.25 116.67,114.25 128.2,97.25 139.73,77.36 151.26,79.87 162.79,43.18 174.32,62.49 185.85,125.26 197.38,237.27 208.91,288.45 220.44,291.15 231.97,291.15 243.5,291.15 255.03,291.15 266.56,277.82 278.09,243.06 289.62,204.44 301.15,161.95 312.68,157.7 324.21,144.57 335.74,140.32 347.27,119.85 358.8,103.63 370.33,112.12 381.86,101.69 393.39,94.94 404.92,111.74 416.45,178.37 427.98,257.55 439.51,291.15 451.04,291.15 462.57,291.15 474.1,291.15 485.63,291.15 497.16,278.79 508.69,260.83 520.22,211.2 531.75,182.23 543.28,149.4 554.81,146.5 566.34,116.57 577.87,129.5 589.4,114.05 600.93,114.05 612.46,66.35 623.99,47.43 635.52,53.41 647.05,130.08 658.58,212.16 670.11,281.69 681.64,290.76 681.64,291" fill="#6ed0e0" fill-opacity="0.1"/><polyline points="0,291.15 1.37,291.15 12.9,291.15 24.43,291.15 35.96,280.14 47.49,250.79 59.02,227.61 70.55,178.94 82.08,165.81 93.61,131.05 105.14,142.25 116.67,114.25 128.2,97.25 139.73,77.36 151.26,79.87 162.79,43.18 174.32,62.49 185.85,125.26 197.38,237.27 208.91,288.45 220.44,291.15 231.97,291.15 243.5,291.15 255.03,291.15 266.56,277.82 278.09,243.06 289.62,204.44 301.15,161.95 312.68,157.7 324.21,144.57 335.74,140.32 347.27,119.85 358.8,103.63 370.33,112.12 381.86,101.69 393.39,94.94 404.92,111.74 416.45,178.37 427.98,257.55 439.51,291.15 451.04,291.15 462.57,291.15 474.1,291.15 485.63,291.15 497.16,278.79 508.69,260.83 520.22,211.2 531.75,182.23 543.28,149.4 554.81,146.5 566.34,116.57 577.87,129.5 589.4,114.05 600.93,114.05 612.46,66.35 623.99,47.43 635.52,53.41 647.05,130.08 658.58,212.16 670.11,281.69 681.64,290.76" fill="none" stroke="#7eb26d" stroke-width="2.2" stroke-linejoin="round"/><polyline points="0,291.15 1.37,291.15 12.9,291.15 24.43,291.15 35.96,280.14 47.49,250.79 59.02,227.61 70.55,178.94 82.08,165.81 93.61,131.05 105.14,142.25 116.67,114.25 128.2,97.25 139.73,77.36 151.26,79.87 162.79,43.18 174.32,62.49 185.85,125.26 197.38,237.27 208.91,288.45 220.44,291.15 231.97,291.15 243.5,291.15 255.03,291.15 266.56,277.82 278.09,243.06 289.62,204.44 301.15,161.95 312.68,157.7 324.21,144.57 335.74,140.32 347.27,119.85 358.8,103.63 370.33,112.12 381.86,101.69 393.39,94.94 404.92,111.74 416.45,178.37 427.98,257.55 439.51,291.15 451.04,291.15 462.57,291.15 474.1,291.15 485.63,291.15 497.16,278.79 508.69,260.83 520.22,211.2 531.75,182.23 543.28,149.4 554.81,146.5 566.34,116.57 577.87,129.5 589.4,114.05 600.93,114.05 612.46,66.35 623.99,47.43 635.52,53.41 647.05,130.08 658.58,212.16 670.11,281.69 681.64,290.76" fill="none" stroke="#eab839" stroke-width="2.2" stroke-linejoin="round"/><polyline points="0,291.15 1.37,291.15 12.9,291.15 24.43,291.15 35.96,280.14 47.49,250.79 59.02,227.61 70.55,178.94 82.08,165.81 93.61,131.05 105.14,142.25 116.67,114.25 128.2,97.25 139.73,77.36 151.26,79.87 162.79,43.18 174.32,62.49 185.85,125.26 197.38,237.27 208.91,288.45 220.44,291.15 231.97,291.15 243.5,291.15 255.03,291.15 266.56,277.82 278.09,243.06 289.62,204.44 301.15,161.95 312.68,157.7 324.21,144.57 335.74,140.32 347.27,119.85 358.8,103.63 370.33,112.12 381.86,101.69 393.39,94.94 404.92,111.74 416.45,178.37 427.98,257.55 439.51,291.15 451.04,291.15 462.57,291.15 474.1,291.15 485.63,291.15 497.16,278.79 508.69,260.83 520.22,211.2 531.75,182.23 543.28,149.4 554.81,146.5 566.34,116.57 577.87,129.5 589.4,114.05 600.93,114.05 612.46,66.35 623.99,47.43 635.52,53.41 647.05,130.08 658.58,212.16 670.11,281.69 681.64,290.76" fill="none" stroke="#6ed0e0" stroke-width="2.2" stroke-linejoin="round"/></svg>
<span class="t" style="left:1006.28px;top:754.65px;font-size:24.48px;color:#ccccdc;-webkit-text-stroke:0.29px #ccccdc;">3 req/s</span>
<span class="t" style="left:972.27px;top:802.65px;font-size:24.48px;color:#ccccdc;-webkit-text-stroke:0.29px #ccccdc;">2.50 req/s</span>
<span class="t" style="left:1006.28px;top:850.65px;font-size:24.48px;color:#ccccdc;-webkit-text-stroke:0.29px #ccccdc;">2 req/s</span>
<span class="t" style="left:972.27px;top:898.65px;font-size:24.48px;color:#ccccdc;-webkit-text-stroke:0.29px #ccccdc;">1.50 req/s</span>
<span class="t" style="left:1006.28px;top:948.65px;font-size:24.48px;color:#ccccdc;-webkit-text-stroke:0.29px #ccccdc;">1 req/s</span>
<span class="t" style="left:958.66px;top:996.65px;font-size:24.48px;color:#ccccdc;-webkit-text-stroke:0.29px #ccccdc;">0.500 req/s</span>
<span class="t" style="left:1006.28px;top:1044.65px;font-size:24.48px;color:#ccccdc;-webkit-text-stroke:0.29px #ccccdc;">0 req/s</span>
<span class="t" style="left:1076.15px;top:1088.85px;font-size:24.48px;color:#ccccdc;-webkit-text-stroke:0.29px #ccccdc;letter-spacing:-0.48px;">18:40</span>
<span class="t" style="left:1168.15px;top:1088.85px;font-size:24.48px;color:#ccccdc;-webkit-text-stroke:0.29px #ccccdc;letter-spacing:-0.48px;">18:42</span>
<span class="t" style="left:1262.15px;top:1088.85px;font-size:24.48px;color:#ccccdc;-webkit-text-stroke:0.29px #ccccdc;letter-spacing:-0.48px;">18:44</span>
<span class="t" style="left:1354.15px;top:1088.85px;font-size:24.48px;color:#ccccdc;-webkit-text-stroke:0.29px #ccccdc;letter-spacing:-0.48px;">18:46</span>
<span class="t" style="left:1446.15px;top:1088.85px;font-size:24.48px;color:#ccccdc;-webkit-text-stroke:0.29px #ccccdc;letter-spacing:-0.48px;">18:48</span>
<span class="t" style="left:1538.15px;top:1088.85px;font-size:24.48px;color:#ccccdc;-webkit-text-stroke:0.29px #ccccdc;letter-spacing:-0.48px;">18:50</span>
<span class="t" style="left:1630.15px;top:1088.85px;font-size:24.48px;color:#ccccdc;-webkit-text-stroke:0.29px #ccccdc;letter-spacing:-0.48px;">18:52</span>
<span class="t" style="left:1722.15px;top:1088.85px;font-size:24.48px;color:#ccccdc;-webkit-text-stroke:0.29px #ccccdc;letter-spacing:-0.48px;">18:54</span>
<div style="left:971px;top:1192.8px;width:28px;height:8px;background:#7eb26d;border-radius:2px;"></div>
<span class="t" style="left:1018.15px;top:1182.55px;font-size:24.48px;color:#ccccdc;-webkit-text-stroke:0.29px #ccccdc;letter-spacing:0.12px;">apolloserver.sample-apps.svc.cluster.local:4001</span>
<div style="left:967px;top:1221.2px;width:850px;height:52px;background:#22252b;"></div>
<div style="left:971px;top:1244.8px;width:28px;height:8px;background:#eab839;border-radius:2px;"></div>
<div class="clip" style="left:1017px;top:1230.55px;width:800px;height:33.6px"><span class="t" style="left:1.15px;top:4px;font-size:24.48px;color:#ccccdc;-webkit-text-stroke:0.29px #ccccdc;letter-spacing:0.09px;">apolloserver.sample-apps.svc.cluster.local:4001 - apolloserver-598d8c6b57-xntns</span></div>
<div style="left:971px;top:1296.8px;width:28px;height:8px;background:#6ed0e0;border-radius:2px;"></div>
<span class="t" style="left:1019.15px;top:1286.55px;font-size:24.48px;color:#ccccdc;-webkit-text-stroke:0.29px #ccccdc;letter-spacing:0.86px;">Total</span>
</section>
<section>
<div class="p" style="left:1851px;top:668px;width:896px;height:668px"><div class="corner"></div></div>
<span class="t" style="left:1864.92px;top:679.4px;font-size:21.73px;color:#9596a4;font-family:'Liberation Mono', monospace;font-weight:700;-webkit-text-stroke:1.19px #9596a4;transform:scaleX(0.7);transform-origin:0 0;">i</span>
<span class="t" style="left:2183.36px;top:687.99px;font-size:27.02px;color:#ccccdc;-webkit-text-stroke:1.22px #ccccdc;letter-spacing:0.33px;">Response Latency</span>
<svg class="ic" style="left:1967px;top:768px" width="730" height="294" viewBox="0 0 730 294"><rect x="14" y="0" width="2" height="292" fill="rgba(200,200,205,0.23)"/><rect x="110" y="0" width="2" height="292" fill="rgba(200,200,205,0.23)"/><rect x="208" y="0" width="2" height="292" fill="rgba(200,200,205,0.23)"/><rect x="306" y="0" width="2" height="292" fill="rgba(200,200,205,0.23)"/><rect x="402" y="0" width="2" height="292" fill="rgba(200,200,205,0.23)"/><rect x="500" y="0" width="2" height="292" fill="rgba(200,200,205,0.23)"/><rect x="598" y="0" width="2" height="292" fill="rgba(200,200,205,0.23)"/><rect x="694" y="0" width="2" height="292" fill="rgba(200,200,205,0.23)"/><rect x="0" y="0" width="730" height="2" fill="rgba(200,200,205,0.23)"/><rect x="0" y="72" width="730" height="2" fill="rgba(200,200,205,0.23)"/><rect x="0" y="144" width="730" height="2" fill="rgba(200,200,205,0.23)"/><rect x="0" y="218" width="730" height="2" fill="rgba(200,200,205,0.23)"/><rect x="0" y="290" width="730" height="2" fill="rgba(200,200,205,0.23)"/><polygon points="39.28,291 39.28,43.99 51.42,184.66 63.56,205.05 75.7,226.05 87.84,216.87 99.98,212.59 112.12,194.85 124.26,187.72 136.4,192.82 148.54,218.3 160.68,251.33 172.82,257.44 184.96,245.21 197.1,242.36 209.24,230.53 221.38,262.13 233.52,235.83 245.66,209.33 257.8,183.03 269.94,156.73 282.08,191.8 294.22,197.5 306.36,228.49 318.5,207.09 330.64,229.72 342.78,252.55 354.92,255 367.06,247.05 379.2,219.32 391.34,223.4 403.48,228.9 415.62,236.65 427.76,251.33 439.9,244.4 452.04,262.13 464.18,263.56 476.32,251.94 488.46,240.52 500.6,228.9 512.74,217.28 524.88,205.66 537.02,181.6 549.16,216.26 561.3,250.92 573.44,262.13 585.58,262.13 597.72,262.74 609.86,212.18 622,199.54 634.14,195.87 646.28,245.41 658.42,254.39 670.56,252.55 682.7,262.13 694.84,262.13 706.98,215.85 706.98,291" fill="#7eb26d" fill-opacity="0.1"/><polygon points="39.28,291 39.28,43.99 51.42,184.66 63.56,205.05 75.7,226.05 87.84,216.87 99.98,212.59 112.12,194.85 124.26,187.72 136.4,192.82 148.54,218.3 160.68,251.33 172.82,257.44 184.96,245.21 197.1,242.36 209.24,230.53 221.38,262.13 233.52,235.83 245.66,209.33 257.8,183.03 269.94,156.73 282.08,191.8 294.22,197.5 306.36,228.49 318.5,207.09 330.64,229.72 342.78,252.55 354.92,255 367.06,247.05 379.2,219.32 391.34,223.4 403.48,228.9 415.62,236.65 427.76,251.33 439.9,244.4 452.04,262.13 464.18,263.56 476.32,251.94 488.46,240.52 500.6,228.9 512.74,217.28 524.88,205.66 537.02,181.6 549.16,216.26 561.3,250.92 573.44,262.13 585.58,262.13 597.72,262.74 609.86,212.18 622,199.54 634.14,195.87 646.28,245.41 658.42,254.39 670.56,252.55 682.7,262.13 694.84,262.13 706.98,215.85 706.98,291" fill="#eab839" fill-opacity="0.1"/><polygon points="39.28,291 39.28,43.99 51.42,184.66 63.56,205.05 75.7,226.05 87.84,216.87 99.98,212.59 112.12,194.85 124.26,187.72 136.4,192.82 148.54,218.3 160.68,251.33 172.82,257.44 184.96,245.21 197.1,242.36 209.24,230.53 221.38,262.13 233.52,235.83 245.66,209.33 257.8,183.03 269.94,156.73 282.08,191.8 294.22,197.5 306.36,228.49 318.5,207.09 330.64,229.72 342.78,252.55 354.92,255 367.06,247.05 379.2,219.32 391.34,223.4 403.48,228.9 415.62,236.65 427.76,251.33 439.9,244.4 452.04,262.13 464.18,263.56 476.32,251.94 488.46,240.52 500.6,228.9 512.74,217.28 524.88,205.66 537.02,181.6 549.16,216.26 561.3,250.92 573.44,262.13 585.58,262.13 597.72,262.74 609.86,212.18 622,199.54 634.14,195.87 646.28,245.41 658.42,254.39 670.56,252.55 682.7,262.13 694.84,262.13 706.98,215.85 706.98,291" fill="#6ed0e0" fill-opacity="0.1"/><polyline points="39.28,43.99 51.42,184.66 63.56,205.05 75.7,226.05 87.84,216.87 99.98,212.59 112.12,194.85 124.26,187.72 136.4,192.82 148.54,218.3 160.68,251.33 172.82,257.44 184.96,245.21 197.1,242.36 209.24,230.53 221.38,262.13 233.52,235.83 245.66,209.33 257.8,183.03 269.94,156.73 282.08,191.8 294.22,197.5 306.36,228.49 318.5,207.09 330.64,229.72 342.78,252.55 354.92,255 367.06,247.05 379.2,219.32 391.34,223.4 403.48,228.9 415.62,236.65 427.76,251.33 439.9,244.4 452.04,262.13 464.18,263.56 476.32,251.94 488.46,240.52 500.6,228.9 512.74,217.28 524.88,205.66 537.02,181.6 549.16,216.26 561.3,250.92 573.44,262.13 585.58,262.13 597.72,262.74 609.86,212.18 622,199.54 634.14,195.87 646.28,245.41 658.42,254.39 670.56,252.55 682.7,262.13 694.84,262.13 706.98,215.85" fill="none" stroke="#7eb26d" stroke-width="2.2" stroke-linejoin="round"/><polyline points="39.28,43.99 51.42,184.66 63.56,205.05 75.7,226.05 87.84,216.87 99.98,212.59 112.12,194.85 124.26,187.72 136.4,192.82 148.54,218.3 160.68,251.33 172.82,257.44 184.96,245.21 197.1,242.36 209.24,230.53 221.38,262.13 233.52,235.83 245.66,209.33 257.8,183.03 269.94,156.73 282.08,191.8 294.22,197.5 306.36,228.49 318.5,207.09 330.64,229.72 342.78,252.55 354.92,255 367.06,247.05 379.2,219.32 391.34,223.4 403.48,228.9 415.62,236.65 427.76,251.33 439.9,244.4 452.04,262.13 464.18,263.56 476.32,251.94 488.46,240.52 500.6,228.9 512.74,217.28 524.88,205.66 537.02,181.6 549.16,216.26 561.3,250.92 573.44,262.13 585.58,262.13 597.72,262.74 609.86,212.18 622,199.54 634.14,195.87 646.28,245.41 658.42,254.39 670.56,252.55 682.7,262.13 694.84,262.13 706.98,215.85" fill="none" stroke="#eab839" stroke-width="2.2" stroke-linejoin="round"/><polyline points="39.28,43.99 51.42,184.66 63.56,205.05 75.7,226.05 87.84,216.87 99.98,212.59 112.12,194.85 124.26,187.72 136.4,192.82 148.54,218.3 160.68,251.33 172.82,257.44 184.96,245.21 197.1,242.36 209.24,230.53 221.38,262.13 233.52,235.83 245.66,209.33 257.8,183.03 269.94,156.73 282.08,191.8 294.22,197.5 306.36,228.49 318.5,207.09 330.64,229.72 342.78,252.55 354.92,255 367.06,247.05 379.2,219.32 391.34,223.4 403.48,228.9 415.62,236.65 427.76,251.33 439.9,244.4 452.04,262.13 464.18,263.56 476.32,251.94 488.46,240.52 500.6,228.9 512.74,217.28 524.88,205.66 537.02,181.6 549.16,216.26 561.3,250.92 573.44,262.13 585.58,262.13 597.72,262.74 609.86,212.18 622,199.54 634.14,195.87 646.28,245.41 658.42,254.39 670.56,252.55 682.7,262.13 694.84,262.13 706.98,215.85" fill="none" stroke="#6ed0e0" stroke-width="2.2" stroke-linejoin="round"/></svg>
<span class="t" style="left:1889.46px;top:754.65px;font-size:24.48px;color:#ccccdc;-webkit-text-stroke:0.29px #ccccdc;">10 ms</span>
<span class="t" style="left:1869.05px;top:826.65px;font-size:24.48px;color:#ccccdc;-webkit-text-stroke:0.29px #ccccdc;">7.50 ms</span>
<span class="t" style="left:1903.06px;top:898.65px;font-size:24.48px;color:#ccccdc;-webkit-text-stroke:0.29px #ccccdc;">5 ms</span>
<span class="t" style="left:1869.05px;top:972.65px;font-size:24.48px;color:#ccccdc;-webkit-text-stroke:0.29px #ccccdc;">2.50 ms</span>
<span class="t" style="left:1923.45px;top:1044.65px;font-size:24.48px;color:#ccccdc;-webkit-text-stroke:0.29px #ccccdc;">0 s</span>
<span class="t" style="left:1952.15px;top:1088.85px;font-size:24.48px;color:#ccccdc;-webkit-text-stroke:0.29px #ccccdc;letter-spacing:-0.48px;">18:40</span>
<span class="t" style="left:2048.15px;top:1088.85px;font-size:24.48px;color:#ccccdc;-webkit-text-stroke:0.29px #ccccdc;letter-spacing:-0.48px;">18:42</span>
<span class="t" style="left:2146.15px;top:1088.85px;font-size:24.48px;color:#ccccdc;-webkit-text-stroke:0.29px #ccccdc;letter-spacing:-0.48px;">18:44</span>
<span class="t" style="left:2244.15px;top:1088.85px;font-size:24.48px;color:#ccccdc;-webkit-text-stroke:0.29px #ccccdc;letter-spacing:-0.48px;">18:46</span>
<span class="t" style="left:2340.15px;top:1088.85px;font-size:24.48px;color:#ccccdc;-webkit-text-stroke:0.29px #ccccdc;letter-spacing:-0.48px;">18:48</span>
<span class="t" style="left:2438.15px;top:1088.85px;font-size:24.48px;color:#ccccdc;-webkit-text-stroke:0.29px #ccccdc;letter-spacing:-0.48px;">18:50</span>
<span class="t" style="left:2536.15px;top:1088.85px;font-size:24.48px;color:#ccccdc;-webkit-text-stroke:0.29px #ccccdc;letter-spacing:-0.48px;">18:52</span>
<span class="t" style="left:2632.15px;top:1088.85px;font-size:24.48px;color:#ccccdc;-webkit-text-stroke:0.29px #ccccdc;letter-spacing:-0.48px;">18:54</span>
<div style="left:1883px;top:1192.8px;width:28px;height:8px;background:#7eb26d;border-radius:2px;"></div>
<span class="t" style="left:1930.15px;top:1182.55px;font-size:24.48px;color:#ccccdc;-webkit-text-stroke:0.29px #ccccdc;letter-spacing:0.12px;">apolloserver.sample-apps.svc.cluster.local:4001</span>
<div style="left:1879px;top:1221.2px;width:850px;height:52px;background:#22252b;"></div>
<div style="left:1883px;top:1244.8px;width:28px;height:8px;background:#eab839;border-radius:2px;"></div>
<div class="clip" style="left:1929px;top:1230.55px;width:800px;height:33.6px"><span class="t" style="left:1.15px;top:4px;font-size:24.48px;color:#ccccdc;-webkit-text-stroke:0.29px #ccccdc;letter-spacing:0.09px;">apolloserver.sample-apps.svc.cluster.local:4001 - apolloserver-598d8c6b57-xntns</span></div>
<div style="left:1883px;top:1296.8px;width:28px;height:8px;background:#6ed0e0;border-radius:2px;"></div>
<span class="t" style="left:1931.15px;top:1286.55px;font-size:24.48px;color:#ccccdc;-webkit-text-stroke:0.29px #ccccdc;letter-spacing:0.86px;">Total</span>
</section>
<section>
<div class="p" style="left:27px;top:2112px;width:1352px;height:820px"><div class="corner"></div></div>
<span class="t" style="left:40.92px;top:2123.4px;font-size:21.73px;color:#9596a4;font-family:'Liberation Mono', monospace;font-weight:700;-webkit-text-stroke:1.19px #9596a4;transform:scaleX(0.7);transform-origin:0 0;">i</span>
<span class="t" style="left:632.86px;top:2131.99px;font-size:27.02px;color:#ccccdc;-webkit-text-stroke:1.22px #ccccdc;letter-spacing:-0.29px;">CPU Usage</span>
<svg class="ic" style="left:89px;top:2212px" width="1240" height="440" viewBox="0 0 1240 440"><rect x="22" y="0" width="2" height="438" fill="rgba(200,200,205,0.23)"/><rect x="188" y="0" width="2" height="438" fill="rgba(200,200,205,0.23)"/><rect x="352" y="0" width="2" height="438" fill="rgba(200,200,205,0.23)"/><rect x="518" y="0" width="2" height="438" fill="rgba(200,200,205,0.23)"/><rect x="684" y="0" width="2" height="438" fill="rgba(200,200,205,0.23)"/><rect x="848" y="0" width="2" height="438" fill="rgba(200,200,205,0.23)"/><rect x="1014" y="0" width="2" height="438" fill="rgba(200,200,205,0.23)"/><rect x="1180" y="0" width="2" height="438" fill="rgba(200,200,205,0.23)"/><rect x="0" y="0" width="1240" height="2" fill="rgba(200,200,205,0.23)"/><rect x="0" y="72" width="1240" height="2" fill="rgba(200,200,205,0.23)"/><rect x="0" y="144" width="1240" height="2" fill="rgba(200,200,205,0.23)"/><rect x="0" y="218" width="1240" height="2" fill="rgba(200,200,205,0.23)"/><rect x="0" y="290" width="1240" height="2" fill="rgba(200,200,205,0.23)"/><rect x="0" y="362" width="1240" height="2" fill="rgba(200,200,205,0.23)"/><rect x="0" y="436" width="1240" height="2" fill="rgba(200,200,205,0.23)"/><polygon points="0,437 0,411.51 2.63,411.51 23.3,351.34 43.97,400.4 64.64,321.26 85.31,291.86 105.98,281.91 126.65,181.94 147.32,185.18 167.99,191.19 188.66,85.89 209.33,138.43 230,170.83 250.67,118.76 271.34,151.39 292.01,116.44 312.68,235.63 333.35,355.97 354.02,379.58 374.69,228.22 395.36,403.41 416.03,388.37 436.7,391.15 457.37,389.06 478.04,321.26 498.71,288.86 519.38,268.03 540.05,75.48 560.72,231 581.39,262.24 602.06,136.11 622.73,218.97 643.4,126.16 664.07,127.55 684.74,167.36 705.41,111.12 726.08,261.08 746.75,408.74 767.42,411.05 788.09,405.73 808.76,394.16 829.43,394.16 850.1,404.57 870.77,400.4 891.44,368.7 912.11,236.09 932.78,283.07 953.45,277.75 974.12,290.01 994.79,237.25 1015.46,241.41 1036.13,40.07 1056.8,181.94 1077.47,158.79 1098.14,99.55 1118.81,126.86 1139.48,224.06 1160.15,347.87 1180.82,402.26 1201.49,384.44 1222.16,387.21 1222.16,437" fill="#6ed0e0" fill-opacity="0.1"/><polygon points="0,437 0,417.3 2.63,417.3 23.3,382.12 43.97,409.66 64.64,340.93 85.31,314.31 105.98,299.96 126.65,203.92 147.32,205.54 167.99,204.15 188.66,107.88 209.33,170.37 230,188.88 250.67,140.05 271.34,167.82 292.01,138.89 312.68,248.36 333.35,366.38 354.02,387.21 374.69,317.78 395.36,409.66 416.03,398.09 436.7,400.4 457.37,399.02 478.04,340.93 498.71,308.53 519.38,283.07 540.05,104.87 560.72,249.05 581.39,274.97 602.06,171.52 622.73,243.26 643.4,146.53 664.07,154.17 684.74,186.1 705.41,131.02 726.08,269.18 746.75,416.84 767.42,415.68 788.09,410.36 808.76,397.16 829.43,397.16 850.1,410.36 870.77,404.57 891.44,376.34 912.11,289.55 932.78,301.12 953.45,294.64 974.12,309.68 994.79,261.55 1015.46,261.55 1036.13,75.94 1056.8,202.77 1077.47,181.24 1098.14,126.86 1118.81,150.69 1139.48,240.26 1160.15,358.28 1180.82,406.42 1201.49,391.84 1222.16,395.31 1222.16,437" fill="#7eb26d" fill-opacity="0.1"/><polygon points="0,437 0,430.49 2.63,430.49 23.3,405.03 43.97,426.56 64.64,415.68 85.31,413.83 105.98,417.53 126.65,414.29 147.32,415.45 167.99,423.32 188.66,413.83 209.33,403.41 230,418.46 250.67,414.98 271.34,419.84 292.01,414.29 312.68,424.24 333.35,425.86 354.02,429.1 374.69,347.18 395.36,430.49 416.03,426.56 436.7,426.56 457.37,426.32 478.04,416.6 498.71,416.84 519.38,421.23 540.05,406.88 560.72,417.99 581.39,423.55 602.06,400.4 622.73,411.98 643.4,416.14 664.07,409.66 684.74,417.3 705.41,416.14 726.08,423.55 746.75,428.41 767.42,431.88 788.09,431.88 808.76,433.5 829.43,433.5 850.1,430.03 870.77,431.18 891.44,428.41 912.11,383.28 932.78,417.99 953.45,419.61 974.12,416.14 994.79,412.21 1015.46,416.84 1036.13,399.94 1056.8,414.98 1077.47,412.9 1098.14,408.74 1118.81,412.21 1139.48,418.46 1160.15,424.94 1180.82,431.65 1201.49,429.33 1222.16,427.71 1222.16,437" fill="#eab839" fill-opacity="0.1"/><polyline points="0,411.51 2.63,411.51 23.3,351.34 43.97,400.4 64.64,321.26 85.31,291.86 105.98,281.91 126.65,181.94 147.32,185.18 167.99,191.19 188.66,85.89 209.33,138.43 230,170.83 250.67,118.76 271.34,151.39 292.01,116.44 312.68,235.63 333.35,355.97 354.02,379.58 374.69,228.22 395.36,403.41 416.03,388.37 436.7,391.15 457.37,389.06 478.04,321.26 498.71,288.86 519.38,268.03 540.05,75.48 560.72,231 581.39,262.24 602.06,136.11 622.73,218.97 643.4,126.16 664.07,127.55 684.74,167.36 705.41,111.12 726.08,261.08 746.75,408.74 767.42,411.05 788.09,405.73 808.76,394.16 829.43,394.16 850.1,404.57 870.77,400.4 891.44,368.7 912.11,236.09 932.78,283.07 953.45,277.75 974.12,290.01 994.79,237.25 1015.46,241.41 1036.13,40.07 1056.8,181.94 1077.47,158.79 1098.14,99.55 1118.81,126.86 1139.48,224.06 1160.15,347.87 1180.82,402.26 1201.49,384.44 1222.16,387.21" fill="none" stroke="#6ed0e0" stroke-width="1.8" stroke-linejoin="round"/><polyline points="0,417.3 2.63,417.3 23.3,382.12 43.97,409.66 64.64,340.93 85.31,314.31 105.98,299.96 126.65,203.92 147.32,205.54 167.99,204.15 188.66,107.88 209.33,170.37 230,188.88 250.67,140.05 271.34,167.82 292.01,138.89 312.68,248.36 333.35,366.38 354.02,387.21 374.69,317.78 395.36,409.66 416.03,398.09 436.7,400.4 457.37,399.02 478.04,340.93 498.71,308.53 519.38,283.07 540.05,104.87 560.72,249.05 581.39,274.97 602.06,171.52 622.73,243.26 643.4,146.53 664.07,154.17 684.74,186.1 705.41,131.02 726.08,269.18 746.75,416.84 767.42,415.68 788.09,410.36 808.76,397.16 829.43,397.16 850.1,410.36 870.77,404.57 891.44,376.34 912.11,289.55 932.78,301.12 953.45,294.64 974.12,309.68 994.79,261.55 1015.46,261.55 1036.13,75.94 1056.8,202.77 1077.47,181.24 1098.14,126.86 1118.81,150.69 1139.48,240.26 1160.15,358.28 1180.82,406.42 1201.49,391.84 1222.16,395.31" fill="none" stroke="#7eb26d" stroke-width="1.8" stroke-linejoin="round"/><polyline points="0,430.49 2.63,430.49 23.3,405.03 43.97,426.56 64.64,415.68 85.31,413.83 105.98,417.53 126.65,414.29 147.32,415.45 167.99,423.32 188.66,413.83 209.33,403.41 230,418.46 250.67,414.98 271.34,419.84 292.01,414.29 312.68,424.24 333.35,425.86 354.02,429.1 374.69,347.18 395.36,430.49 416.03,426.56 436.7,426.56 457.37,426.32 478.04,416.6 498.71,416.84 519.38,421.23 540.05,406.88 560.72,417.99 581.39,423.55 602.06,400.4 622.73,411.98 643.4,416.14 664.07,409.66 684.74,417.3 705.41,416.14 726.08,423.55 746.75,428.41 767.42,431.88 788.09,431.88 808.76,433.5 829.43,433.5 850.1,430.03 870.77,431.18 891.44,428.41 912.11,383.28 932.78,417.99 953.45,419.61 974.12,416.14 994.79,412.21 1015.46,416.84 1036.13,399.94 1056.8,414.98 1077.47,412.9 1098.14,408.74 1118.81,412.21 1139.48,418.46 1160.15,424.94 1180.82,431.65 1201.49,429.33 1222.16,427.71" fill="none" stroke="#eab839" stroke-width="1.8" stroke-linejoin="round"/></svg>
<span class="t" style="left:46.61px;top:2198.65px;font-size:24.48px;color:#ccccdc;-webkit-text-stroke:0.29px #ccccdc;transform:scaleX(0.86);transform-origin:0 0;">6%</span>
<span class="t" style="left:46.61px;top:2270.65px;font-size:24.48px;color:#ccccdc;-webkit-text-stroke:0.29px #ccccdc;transform:scaleX(0.86);transform-origin:0 0;">5%</span>
<span class="t" style="left:46.61px;top:2342.65px;font-size:24.48px;color:#ccccdc;-webkit-text-stroke:0.29px #ccccdc;transform:scaleX(0.86);transform-origin:0 0;">4%</span>
<span class="t" style="left:46.61px;top:2416.65px;font-size:24.48px;color:#ccccdc;-webkit-text-stroke:0.29px #ccccdc;transform:scaleX(0.86);transform-origin:0 0;">3%</span>
<span class="t" style="left:46.61px;top:2488.65px;font-size:24.48px;color:#ccccdc;-webkit-text-stroke:0.29px #ccccdc;transform:scaleX(0.86);transform-origin:0 0;">2%</span>
<span class="t" style="left:46.61px;top:2560.65px;font-size:24.48px;color:#ccccdc;-webkit-text-stroke:0.29px #ccccdc;transform:scaleX(0.86);transform-origin:0 0;">1%</span>
<span class="t" style="left:46.61px;top:2634.65px;font-size:24.48px;color:#ccccdc;-webkit-text-stroke:0.29px #ccccdc;transform:scaleX(0.86);transform-origin:0 0;">0%</span>
<span class="t" style="left:82.15px;top:2678.85px;font-size:24.48px;color:#ccccdc;-webkit-text-stroke:0.29px #ccccdc;letter-spacing:-0.48px;">18:40</span>
<span class="t" style="left:248.15px;top:2678.85px;font-size:24.48px;color:#ccccdc;-webkit-text-stroke:0.29px #ccccdc;letter-spacing:-0.48px;">18:42</span>
<span class="t" style="left:412.15px;top:2678.85px;font-size:24.48px;color:#ccccdc;-webkit-text-stroke:0.29px #ccccdc;letter-spacing:-0.48px;">18:44</span>
<span class="t" style="left:578.15px;top:2678.85px;font-size:24.48px;color:#ccccdc;-webkit-text-stroke:0.29px #ccccdc;letter-spacing:-0.48px;">18:46</span>
<span class="t" style="left:744.15px;top:2678.85px;font-size:24.48px;color:#ccccdc;-webkit-text-stroke:0.29px #ccccdc;letter-spacing:-0.48px;">18:48</span>
<span class="t" style="left:908.15px;top:2678.85px;font-size:24.48px;color:#ccccdc;-webkit-text-stroke:0.29px #ccccdc;letter-spacing:-0.48px;">18:50</span>
<span class="t" style="left:1074.15px;top:2678.85px;font-size:24.48px;color:#ccccdc;-webkit-text-stroke:0.29px #ccccdc;letter-spacing:-0.48px;">18:52</span>
<span class="t" style="left:1240.15px;top:2678.85px;font-size:24.48px;color:#ccccdc;-webkit-text-stroke:0.29px #ccccdc;letter-spacing:-0.48px;">18:54</span>
<span class="t" style="left:1225.52px;top:2725.48px;font-size:23.16px;color:#33a2e5;-webkit-text-stroke:1.04px #33a2e5;letter-spacing:1.76px;">min</span>
<div class="clip" style="left:1316px;top:2721.48px;width:45px;height:33.6px"><span class="t" style="left:3.52px;top:4px;font-size:23.16px;color:#33a2e5;-webkit-text-stroke:1.04px #33a2e5;letter-spacing:-0.1px;">max</span></div>
<div style="left:59px;top:2782.0px;width:28px;height:8px;background:#6ed0e0;border-radius:2px;"></div>
<span class="t" style="left:107.15px;top:2771.75px;font-size:24.48px;color:#ccccdc;-webkit-text-stroke:0.29px #ccccdc;letter-spacing:0.03px;">Total CPU - apolloserver.sample-apps.svc.cluster.local:4001 - apolloserver-598d8c6b57-xntns</span>
<span class="t" style="left:1203.15px;top:2771.75px;font-size:24.48px;color:#ccccdc;-webkit-text-stroke:0.29px #ccccdc;letter-spacing:-0.71px;">0.344%</span>
<div class="clip" style="left:1314px;top:2767.75px;width:47px;height:33.6px"><span class="t" style="left:3.65px;top:4px;font-size:24.48px;color:#ccccdc;-webkit-text-stroke:0.29px #ccccdc;letter-spacing:-0.73px;">5.45%</span></div>
<div style="left:55px;top:2810.1px;width:1306px;height:52px;background:#22252b;"></div>
<div style="left:59px;top:2834.0px;width:28px;height:8px;background:#7eb26d;border-radius:2px;"></div>
<span class="t" style="left:106.15px;top:2823.75px;font-size:24.48px;color:#ccccdc;-webkit-text-stroke:0.29px #ccccdc;letter-spacing:-0.02px;">User CPU - apolloserver.sample-apps.svc.cluster.local:4001 - apolloserver-598d8c6b57-xntns</span>
<span class="t" style="left:1203.15px;top:2823.75px;font-size:24.48px;color:#ccccdc;-webkit-text-stroke:0.29px #ccccdc;letter-spacing:-0.71px;">0.257%</span>
<div class="clip" style="left:1314px;top:2819.75px;width:47px;height:33.6px"><span class="t" style="left:3.65px;top:4px;font-size:24.48px;color:#ccccdc;-webkit-text-stroke:0.29px #ccccdc;letter-spacing:-0.73px;">4.95%</span></div>
<div style="left:59px;top:2885.9px;width:28px;height:8px;background:#eab839;border-radius:2px;"></div>
<span class="t" style="left:106.15px;top:2875.65px;font-size:24.48px;color:#ccccdc;-webkit-text-stroke:0.29px #ccccdc;letter-spacing:-0.01px;">System CPU - apolloserver.sample-apps.svc.cluster.local:4001 - apolloserver-598d8c6b57-xntns</span>
<span class="t" style="left:1189.15px;top:2875.65px;font-size:24.48px;color:#ccccdc;-webkit-text-stroke:0.29px #ccccdc;letter-spacing:-0.52px;">0.0349%</span>
<div class="clip" style="left:1314px;top:2871.65px;width:47px;height:33.6px"><span class="t" style="left:2.65px;top:4px;font-size:24.48px;color:#ccccdc;-webkit-text-stroke:0.29px #ccccdc;letter-spacing:-0.48px;">1.23%</span></div>
</section>
<section>
<div class="p" style="left:1395px;top:2112px;width:1352px;height:820px"><div class="corner"></div></div>
<span class="t" style="left:1408.92px;top:2123.4px;font-size:21.73px;color:#9596a4;font-family:'Liberation Mono', monospace;font-weight:700;-webkit-text-stroke:1.19px #9596a4;transform:scaleX(0.7);transform-origin:0 0;">i</span>
<span class="t" style="left:1975.61px;top:2131.99px;font-size:27.02px;color:#ccccdc;-webkit-text-stroke:1.22px #ccccdc;letter-spacing:0.6px;">Memory Usage</span>
<svg class="ic" style="left:1521px;top:2212px" width="1176" height="394" viewBox="0 0 1176 394"><rect x="20" y="0" width="2" height="392" fill="rgba(200,200,205,0.23)"/><rect x="178" y="0" width="2" height="392" fill="rgba(200,200,205,0.23)"/><rect x="334" y="0" width="2" height="392" fill="rgba(200,200,205,0.23)"/><rect x="492" y="0" width="2" height="392" fill="rgba(200,200,205,0.23)"/><rect x="648" y="0" width="2" height="392" fill="rgba(200,200,205,0.23)"/><rect x="804" y="0" width="2" height="392" fill="rgba(200,200,205,0.23)"/><rect x="962" y="0" width="2" height="392" fill="rgba(200,200,205,0.23)"/><rect x="1118" y="0" width="2" height="392" fill="rgba(200,200,205,0.23)"/><rect x="0" y="0" width="1176" height="2" fill="rgba(200,200,205,0.23)"/><rect x="0" y="78" width="1176" height="2" fill="rgba(200,200,205,0.23)"/><rect x="0" y="156" width="1176" height="2" fill="rgba(200,200,205,0.23)"/><rect x="0" y="234" width="1176" height="2" fill="rgba(200,200,205,0.23)"/><rect x="0" y="312" width="1176" height="2" fill="rgba(200,200,205,0.23)"/><rect x="0" y="390" width="1176" height="2" fill="rgba(200,200,205,0.23)"/><polygon points="0,391 0,82.42 2.29,82.42 21.9,164.39 41.51,164.39 61.12,168.9 80.73,160.32 100.34,145.73 119.95,142.51 139.56,125.98 159.17,125.98 178.78,120.62 198.39,83.92 218,80.7 237.61,80.7 257.22,78.13 276.83,75.77 296.44,75.77 316.05,75.77 335.66,75.77 355.27,193.36 374.88,191.86 394.49,192.94 414.1,190.79 433.71,191.86 453.32,183.71 472.93,168.69 492.54,150.02 512.15,147.23 531.76,126.84 551.37,126.41 570.98,103.88 590.59,81.78 610.2,75.55 629.81,75.55 649.42,73.84 669.03,74.91 688.64,74.91 708.25,74.91 727.86,74.91 747.47,74.91 767.08,74.91 786.69,74.91 806.3,74.91 825.91,74.91 845.52,74.91 865.13,156.03 884.74,136.71 904.35,124.27 923.96,102.81 943.57,119.97 963.18,118.26 982.79,79.2 1002.4,77.7 1022.01,76.2 1041.62,75.34 1061.23,72.12 1080.84,72.12 1100.45,72.12 1120.06,72.12 1139.67,72.12 1159.28,72.12 1159.28,391" fill="#7eb26d" fill-opacity="0.1"/><polygon points="0,391 0,208.6 2.29,208.6 21.9,307.74 41.51,307.74 61.12,310.53 80.73,299.59 100.34,285.85 119.95,259.89 139.56,262.68 159.17,262.68 178.78,210.75 198.39,210.75 218,205.81 237.61,207.74 257.22,206.45 276.83,203.88 296.44,203.88 316.05,203.88 335.66,203.88 355.27,329.85 374.88,329.85 394.49,329.85 414.1,329.85 433.71,329.85 453.32,328.56 472.93,312.03 492.54,295.94 512.15,269.55 531.76,269.55 551.37,269.55 570.98,214.39 590.59,214.39 610.2,210.75 629.81,210.75 649.42,207.31 669.03,208.39 688.64,208.39 708.25,208.39 727.86,208.39 747.47,208.39 767.08,208.39 786.69,208.39 806.3,208.39 825.91,208.39 845.52,208.39 865.13,303.02 884.74,272.76 904.35,271.26 923.96,244.87 943.57,264.82 963.18,212.25 982.79,212.25 1002.4,210.53 1022.01,209.46 1041.62,208.82 1061.23,205.81 1080.84,205.81 1100.45,205.81 1120.06,205.81 1139.67,205.81 1159.28,205.81 1159.28,391" fill="#eab839" fill-opacity="0.1"/><polygon points="0,391 0,295.94 2.29,295.94 21.9,331.78 41.51,329.85 61.12,327.48 80.73,321.05 100.34,314.18 119.95,331.99 139.56,328.77 159.17,319.97 178.78,313.54 198.39,291 218,301.09 237.61,297.01 257.22,295.3 276.83,322.33 296.44,282.42 316.05,310.53 335.66,308.82 355.27,341 374.88,339.29 394.49,340.36 414.1,338.21 433.71,338.86 453.32,336.07 472.93,328.56 492.54,337.14 512.15,324.48 531.76,329.63 551.37,326.41 570.98,329.63 590.59,310.53 610.2,334.57 629.81,303.88 649.42,297.01 669.03,299.16 688.64,308.82 708.25,306.88 727.86,305.17 747.47,303.24 767.08,301.52 786.69,299.59 806.3,297.66 825.91,295.94 845.52,281.99 865.13,308.17 884.74,296.37 904.35,327.7 923.96,322.76 943.57,318.04 963.18,324.48 982.79,314.82 1002.4,290.58 1022.01,302.38 1041.62,296.37 1061.23,310.96 1080.84,291.65 1100.45,314.61 1120.06,312.46 1139.67,310.53 1159.28,308.82 1159.28,391" fill="#6ed0e0" fill-opacity="0.1"/><polygon points="0,391 0,386.5 2.29,386.5 21.9,386.5 41.51,386.5 61.12,386.5 80.73,386.28 100.34,386.07 119.95,387.14 139.56,386.93 159.17,386.28 178.78,387.57 198.39,387.14 218,386.71 237.61,387.14 257.22,386.71 276.83,386.28 296.44,386.07 316.05,385.85 335.66,385.64 355.27,387.36 374.88,387.36 394.49,387.36 414.1,387.36 433.71,387.36 453.32,387.36 472.93,387.14 492.54,387.57 512.15,386.93 531.76,387.36 551.37,386.93 570.98,386.5 590.59,386.07 610.2,385.42 629.81,384.78 649.42,384.14 669.03,387.36 688.64,387.14 708.25,386.93 727.86,386.93 747.47,386.93 767.08,386.71 786.69,386.71 806.3,386.5 825.91,386.5 845.52,386.28 865.13,386.28 884.74,386.07 904.35,387.14 923.96,386.93 943.57,386.5 963.18,387.79 982.79,387.36 1002.4,386.93 1022.01,386.28 1041.62,385.64 1061.23,385 1080.84,384.35 1100.45,384.14 1120.06,384.14 1139.67,383.92 1159.28,383.92 1159.28,391" fill="#ef843c" fill-opacity="0.1"/><polyline points="0,82.42 2.29,82.42 21.9,164.39 41.51,164.39 61.12,168.9 80.73,160.32 100.34,145.73 119.95,142.51 139.56,125.98 159.17,125.98 178.78,120.62 198.39,83.92 218,80.7 237.61,80.7 257.22,78.13 276.83,75.77 296.44,75.77 316.05,75.77 335.66,75.77 355.27,193.36 374.88,191.86 394.49,192.94 414.1,190.79 433.71,191.86 453.32,183.71 472.93,168.69 492.54,150.02 512.15,147.23 531.76,126.84 551.37,126.41 570.98,103.88 590.59,81.78 610.2,75.55 629.81,75.55 649.42,73.84 669.03,74.91 688.64,74.91 708.25,74.91 727.86,74.91 747.47,74.91 767.08,74.91 786.69,74.91 806.3,74.91 825.91,74.91 845.52,74.91 865.13,156.03 884.74,136.71 904.35,124.27 923.96,102.81 943.57,119.97 963.18,118.26 982.79,79.2 1002.4,77.7 1022.01,76.2 1041.62,75.34 1061.23,72.12 1080.84,72.12 1100.45,72.12 1120.06,72.12 1139.67,72.12 1159.28,72.12" fill="none" stroke="#7eb26d" stroke-width="1.8" stroke-linejoin="round"/><polyline points="0,208.6 2.29,208.6 21.9,307.74 41.51,307.74 61.12,310.53 80.73,299.59 100.34,285.85 119.95,259.89 139.56,262.68 159.17,262.68 178.78,210.75 198.39,210.75 218,205.81 237.61,207.74 257.22,206.45 276.83,203.88 296.44,203.88 316.05,203.88 335.66,203.88 355.27,329.85 374.88,329.85 394.49,329.85 414.1,329.85 433.71,329.85 453.32,328.56 472.93,312.03 492.54,295.94 512.15,269.55 531.76,269.55 551.37,269.55 570.98,214.39 590.59,214.39 610.2,210.75 629.81,210.75 649.42,207.31 669.03,208.39 688.64,208.39 708.25,208.39 727.86,208.39 747.47,208.39 767.08,208.39 786.69,208.39 806.3,208.39 825.91,208.39 845.52,208.39 865.13,303.02 884.74,272.76 904.35,271.26 923.96,244.87 943.57,264.82 963.18,212.25 982.79,212.25 1002.4,210.53 1022.01,209.46 1041.62,208.82 1061.23,205.81 1080.84,205.81 1100.45,205.81 1120.06,205.81 1139.67,205.81 1159.28,205.81" fill="none" stroke="#eab839" stroke-width="1.8" stroke-linejoin="round"/><polyline points="0,295.94 2.29,295.94 21.9,331.78 41.51,329.85 61.12,327.48 80.73,321.05 100.34,314.18 119.95,331.99 139.56,328.77 159.17,319.97 178.78,313.54 198.39,291 218,301.09 237.61,297.01 257.22,295.3 276.83,322.33 296.44,282.42 316.05,310.53 335.66,308.82 355.27,341 374.88,339.29 394.49,340.36 414.1,338.21 433.71,338.86 453.32,336.07 472.93,328.56 492.54,337.14 512.15,324.48 531.76,329.63 551.37,326.41 570.98,329.63 590.59,310.53 610.2,334.57 629.81,303.88 649.42,297.01 669.03,299.16 688.64,308.82 708.25,306.88 727.86,305.17 747.47,303.24 767.08,301.52 786.69,299.59 806.3,297.66 825.91,295.94 845.52,281.99 865.13,308.17 884.74,296.37 904.35,327.7 923.96,322.76 943.57,318.04 963.18,324.48 982.79,314.82 1002.4,290.58 1022.01,302.38 1041.62,296.37 1061.23,310.96 1080.84,291.65 1100.45,314.61 1120.06,312.46 1139.67,310.53 1159.28,308.82" fill="none" stroke="#6ed0e0" stroke-width="1.8" stroke-linejoin="round"/><polyline points="0,386.5 2.29,386.5 21.9,386.5 41.51,386.5 61.12,386.5 80.73,386.28 100.34,386.07 119.95,387.14 139.56,386.93 159.17,386.28 178.78,387.57 198.39,387.14 218,386.71 237.61,387.14 257.22,386.71 276.83,386.28 296.44,386.07 316.05,385.85 335.66,385.64 355.27,387.36 374.88,387.36 394.49,387.36 414.1,387.36 433.71,387.36 453.32,387.36 472.93,387.14 492.54,387.57 512.15,386.93 531.76,387.36 551.37,386.93 570.98,386.5 590.59,386.07 610.2,385.42 629.81,384.78 649.42,384.14 669.03,387.36 688.64,387.14 708.25,386.93 727.86,386.93 747.47,386.93 767.08,386.71 786.69,386.71 806.3,386.5 825.91,386.5 845.52,386.28 865.13,386.28 884.74,386.07 904.35,387.14 923.96,386.93 943.57,386.5 963.18,387.79 982.79,387.36 1002.4,386.93 1022.01,386.28 1041.62,385.64 1061.23,385 1080.84,384.35 1100.45,384.14 1120.06,384.14 1139.67,383.92 1159.28,383.92" fill="none" stroke="#ef843c" stroke-width="1.8" stroke-linejoin="round"/></svg>
<span class="t" style="left:1420.23px;top:2198.65px;font-size:24.48px;color:#ccccdc;-webkit-text-stroke:0.29px #ccccdc;">119 MiB</span>
<span class="t" style="left:1411.61px;top:2276.65px;font-size:24.48px;color:#ccccdc;-webkit-text-stroke:0.29px #ccccdc;">95.4 MiB</span>
<span class="t" style="left:1411.61px;top:2354.65px;font-size:24.48px;color:#ccccdc;-webkit-text-stroke:0.29px #ccccdc;">71.5 MiB</span>
<span class="t" style="left:1411.61px;top:2432.65px;font-size:24.48px;color:#ccccdc;-webkit-text-stroke:0.29px #ccccdc;">47.7 MiB</span>
<span class="t" style="left:1411.61px;top:2510.65px;font-size:24.48px;color:#ccccdc;-webkit-text-stroke:0.29px #ccccdc;">23.8 MiB</span>
<span class="t" style="left:1471.45px;top:2588.65px;font-size:24.48px;color:#ccccdc;-webkit-text-stroke:0.29px #ccccdc;">0 B</span>
<span class="t" style="left:1512.15px;top:2632.35px;font-size:24.48px;color:#ccccdc;-webkit-text-stroke:0.29px #ccccdc;letter-spacing:-0.48px;">18:40</span>
<span class="t" style="left:1670.15px;top:2632.35px;font-size:24.48px;color:#ccccdc;-webkit-text-stroke:0.29px #ccccdc;letter-spacing:-0.48px;">18:42</span>
<span class="t" style="left:1826.15px;top:2632.35px;font-size:24.48px;color:#ccccdc;-webkit-text-stroke:0.29px #ccccdc;letter-spacing:-0.48px;">18:44</span>
<span class="t" style="left:1984.15px;top:2632.35px;font-size:24.48px;color:#ccccdc;-webkit-text-stroke:0.29px #ccccdc;letter-spacing:-0.48px;">18:46</span>
<span class="t" style="left:2140.15px;top:2632.35px;font-size:24.48px;color:#ccccdc;-webkit-text-stroke:0.29px #ccccdc;letter-spacing:-0.48px;">18:48</span>
<span class="t" style="left:2296.15px;top:2632.35px;font-size:24.48px;color:#ccccdc;-webkit-text-stroke:0.29px #ccccdc;letter-spacing:-0.48px;">18:50</span>
<span class="t" style="left:2454.15px;top:2632.35px;font-size:24.48px;color:#ccccdc;-webkit-text-stroke:0.29px #ccccdc;letter-spacing:-0.48px;">18:52</span>
<span class="t" style="left:2610.15px;top:2632.35px;font-size:24.48px;color:#ccccdc;-webkit-text-stroke:0.29px #ccccdc;letter-spacing:-0.48px;">18:54</span>
<span class="t" style="left:2647.02px;top:2679.48px;font-size:23.16px;color:#33a2e5;-webkit-text-stroke:1.04px #33a2e5;letter-spacing:2.01px;">min</span>
<div style="left:1427px;top:2736.9px;width:28px;height:8px;background:#7eb26d;border-radius:2px;"></div>
<span class="t" style="left:1474.15px;top:2726.65px;font-size:24.48px;color:#ccccdc;-webkit-text-stroke:0.29px #ccccdc;letter-spacing:0.07px;">Process Memory - apolloserver.sample-apps.svc.cluster.local:4001 - apolloserver-598d8c6b57-xntns</span>
<span class="t" style="left:2607.15px;top:2726.65px;font-size:24.48px;color:#ccccdc;-webkit-text-stroke:0.29px #ccccdc;letter-spacing:0px;">60.0 MiB</span>
<div style="left:1423px;top:2765.2000000000003px;width:1306px;height:51.6px;background:#22252b;"></div>
<div style="left:1427px;top:2788.9px;width:28px;height:8px;background:#eab839;border-radius:2px;"></div>
<span class="t" style="left:1474.15px;top:2778.65px;font-size:24.48px;color:#ccccdc;-webkit-text-stroke:0.29px #ccccdc;letter-spacing:0.07px;">Heap Total - apolloserver.sample-apps.svc.cluster.local:4001 - apolloserver-598d8c6b57-xntns</span>
<span class="t" style="left:2607.15px;top:2778.65px;font-size:24.48px;color:#ccccdc;-webkit-text-stroke:0.29px #ccccdc;letter-spacing:0px;">18.3 MiB</span>
<div style="left:1427px;top:2840.7px;width:28px;height:8px;background:#6ed0e0;border-radius:2px;"></div>
<span class="t" style="left:1474.15px;top:2830.45px;font-size:24.48px;color:#ccccdc;-webkit-text-stroke:0.29px #ccccdc;letter-spacing:0.02px;">Heap Used - apolloserver.sample-apps.svc.cluster.local:4001 - apolloserver-598d8c6b57-xntns</span>
<span class="t" style="left:2607.15px;top:2830.45px;font-size:24.48px;color:#ccccdc;-webkit-text-stroke:0.29px #ccccdc;letter-spacing:0px;">15.0 MiB</span>
<div style="left:1423px;top:2869.3px;width:1306px;height:44.399999999999636px;background:#22252b;"></div>
<div style="left:1427px;top:2893.0px;width:28px;height:8px;background:#ef843c;border-radius:2px;"></div>
<span class="t" style="left:1474.15px;top:2882.75px;font-size:24.48px;color:#ccccdc;-webkit-text-stroke:0.29px #ccccdc;letter-spacing:0.05px;">External Memory - apolloserver.sample-apps.svc.cluster.local:4001 - apolloserver-598d8c6b57-xntns</span>
<span class="t" style="left:2619.65px;top:2882.75px;font-size:24.48px;color:#ccccdc;-webkit-text-stroke:0.29px #ccccdc;letter-spacing:-0.28px;">872 KiB</span>
</section>
<section>
<div class="p" style="left:27px;top:1352px;width:668px;height:668px"><div class="corner"></div></div>
<span class="t" style="left:40.92px;top:1363.4px;font-size:21.73px;color:#9596a4;font-family:'Liberation Mono', monospace;font-weight:700;-webkit-text-stroke:1.19px #9596a4;transform:scaleX(0.7);transform-origin:0 0;">i</span>
<span class="t" style="left:206.61px;top:1372.19px;font-size:27.02px;color:#ccccdc;-webkit-text-stroke:1.22px #ccccdc;letter-spacing:0.36px;">Top 10 Operations Count</span>
<div style="left:29px;top:1418px;width:664px;height:4.2px;background:#111217;"></div>
<div style="left:29px;top:1422.2px;width:664px;height:48px;background:#22252b;"></div>
<div style="left:29px;top:1470.2px;width:664px;height:3.8px;background:#111217;"></div>
<span class="t" style="left:58.61px;top:1433.39px;font-size:27.02px;color:#33a2e5;-webkit-text-stroke:1.22px #33a2e5;letter-spacing:1.65px;">Metric</span>
<span class="t" style="left:393.11px;top:1433.39px;font-size:27.02px;color:#33a2e5;-webkit-text-stroke:1.22px #33a2e5;letter-spacing:0.93px;">Value</span>
<svg class="ic" style="left:479.9px;top:1442.6px" width="15.2" height="9.8" viewBox="0 0 15.2 9.8" ><polyline points="2,2 7.6,7.8 13.2,2" fill="none" stroke="#33a2e5" stroke-width="2.8" stroke-linecap="round" stroke-linejoin="round"/></svg>
<div style="left:358.8px;top:1480.2px;width:3.8px;height:67.2px;background:#111217;"></div>
<div style="left:29px;top:1547.3px;width:664px;height:3.8px;background:#111217;"></div>
<span class="t" style="left:59.17px;top:1497.23px;font-size:28.56px;color:#ccccdc;-webkit-text-stroke:0.34px #ccccdc;letter-spacing:0.16px;">Value</span>
<span class="t" style="left:393.17px;top:1497.23px;font-size:28.56px;color:#ccccdc;-webkit-text-stroke:0.34px #ccccdc;letter-spacing:0.41px;">10947</span>
</section>
<section>
<div class="p" style="left:711px;top:1352px;width:668px;height:668px"><div class="corner"></div></div>
<span class="t" style="left:724.92px;top:1363.4px;font-size:21.73px;color:#9596a4;font-family:'Liberation Mono', monospace;font-weight:700;-webkit-text-stroke:1.19px #9596a4;transform:scaleX(0.7);transform-origin:0 0;">i</span>
<span class="t" style="left:921.61px;top:1372.19px;font-size:27.02px;color:#ccccdc;-webkit-text-stroke:1.22px #ccccdc;letter-spacing:0.25px;">Top 10 Errors Count</span>
<div style="left:713px;top:1418px;width:664px;height:4.2px;background:#111217;"></div>
<div style="left:713px;top:1422.2px;width:664px;height:48px;background:#22252b;"></div>
<div style="left:713px;top:1470.2px;width:664px;height:3.8px;background:#111217;"></div>
<span class="t" style="left:742.61px;top:1433.39px;font-size:27.02px;color:#33a2e5;-webkit-text-stroke:1.22px #33a2e5;letter-spacing:1.65px;">Metric</span>
<span class="t" style="left:1088.11px;top:1433.39px;font-size:27.02px;color:#33a2e5;-webkit-text-stroke:1.22px #33a2e5;letter-spacing:0.93px;">Value</span>
<svg class="ic" style="left:1174.9px;top:1442.6px" width="15.2" height="9.8" viewBox="0 0 15.2 9.8" ><polyline points="2,2 7.6,7.8 13.2,2" fill="none" stroke="#33a2e5" stroke-width="2.8" stroke-linecap="round" stroke-linejoin="round"/></svg>
<div style="left:1054.8px;top:1480.2px;width:3.8px;height:67.2px;background:#111217;"></div>
<div style="left:713px;top:1547.3px;width:664px;height:3.8px;background:#111217;"></div>
<span class="t" style="left:743.17px;top:1497.23px;font-size:28.56px;color:#ccccdc;-webkit-text-stroke:0.34px #ccccdc;letter-spacing:0.16px;">Value</span>
<span class="t" style="left:1088.17px;top:1497.23px;font-size:28.56px;color:#ccccdc;-webkit-text-stroke:0.34px #ccccdc;letter-spacing:0.72px;">1151</span>
</section>
<section>
<div class="p" style="left:1395px;top:1352px;width:668px;height:668px"><div class="corner"></div></div>
<span class="t" style="left:1408.92px;top:1363.4px;font-size:21.73px;color:#9596a4;font-family:'Liberation Mono', monospace;font-weight:700;-webkit-text-stroke:1.19px #9596a4;transform:scaleX(0.7);transform-origin:0 0;">i</span>
<span class="t" style="left:1599.11px;top:1372.19px;font-size:27.02px;color:#ccccdc;-webkit-text-stroke:1.22px #ccccdc;letter-spacing:0.29px;">Top 10 Duration Rate</span>
<div style="left:1397px;top:1418px;width:664px;height:4.2px;background:#111217;"></div>
<div style="left:1397px;top:1422.2px;width:664px;height:48px;background:#22252b;"></div>
<div style="left:1397px;top:1470.2px;width:664px;height:3.8px;background:#111217;"></div>
<span class="t" style="left:1426.61px;top:1433.39px;font-size:27.02px;color:#33a2e5;-webkit-text-stroke:1.22px #33a2e5;letter-spacing:1.65px;">Metric</span>
<span class="t" style="left:1653.61px;top:1433.39px;font-size:27.02px;color:#33a2e5;-webkit-text-stroke:1.22px #33a2e5;letter-spacing:0.6px;">Average Duration</span>
<div style="left:1621.3px;top:1480.2px;width:3.8px;height:67.2px;background:#111217;"></div>
<div style="left:1397px;top:1547.3px;width:664px;height:3.8px;background:#111217;"></div>
<span class="t" style="left:1427.17px;top:1497.23px;font-size:28.56px;color:#ccccdc;-webkit-text-stroke:0.34px #ccccdc;letter-spacing:0.16px;">Value</span>
<span class="t" style="left:1654.17px;top:1497.23px;font-size:28.56px;color:#ccccdc;-webkit-text-stroke:0.34px #ccccdc;letter-spacing:-0.07px;">643 µs</span>
</section>
<section>
<div class="p" style="left:2079px;top:1352px;width:668px;height:668px"><div class="corner"></div></div>
<span class="t" style="left:2092.92px;top:1363.4px;font-size:21.73px;color:#9596a4;font-family:'Liberation Mono', monospace;font-weight:700;-webkit-text-stroke:1.19px #9596a4;transform:scaleX(0.7);transform-origin:0 0;">i</span>
<span class="t" style="left:2206.86px;top:1372.19px;font-size:27.02px;color:#ccccdc;-webkit-text-stroke:1.22px #ccccdc;letter-spacing:0.5px;">Top 10 Slowest Fields Resolution</span>
<div style="left:2081px;top:1418px;width:664px;height:4.2px;background:#111217;"></div>
<div style="left:2081px;top:1422.2px;width:664px;height:48px;background:#22252b;"></div>
<div style="left:2081px;top:1470.2px;width:664px;height:3.8px;background:#111217;"></div>
<span class="t" style="left:2109.61px;top:1433.39px;font-size:27.02px;color:#33a2e5;-webkit-text-stroke:1.22px #33a2e5;letter-spacing:1.19px;">Field</span>
<span class="t" style="left:2360.61px;top:1433.39px;font-size:27.02px;color:#33a2e5;-webkit-text-stroke:1.22px #33a2e5;letter-spacing:0.84px;">Parent</span>
<span class="t" style="left:2594.61px;top:1433.39px;font-size:27.02px;color:#33a2e5;-webkit-text-stroke:1.22px #33a2e5;letter-spacing:1.1px;">Duration</span>
<svg class="ic" style="left:2720.9px;top:1442.6px" width="15.2" height="9.8" viewBox="0 0 15.2 9.8" ><polyline points="2,2 7.6,7.8 13.2,2" fill="none" stroke="#33a2e5" stroke-width="2.8" stroke-linecap="round" stroke-linejoin="round"/></svg>
<div style="left:2329.1px;top:1480.2px;width:3.8px;height:67.2px;background:#111217;"></div>
<div style="left:2563.2px;top:1480.2px;width:3.8px;height:67.2px;background:#111217;"></div>
<div style="left:2081px;top:1547.3px;width:664px;height:3.8px;background:#111217;"></div>
<span class="t" style="left:2111.17px;top:1497.23px;font-size:28.56px;color:#ccccdc;-webkit-text-stroke:0.34px #ccccdc;letter-spacing:0.9px;">title</span>
<span class="t" style="left:2362.67px;top:1497.23px;font-size:28.56px;color:#ccccdc;-webkit-text-stroke:0.34px #ccccdc;letter-spacing:-0.21px;">Book</span>
<span class="t" style="left:2619.17px;top:1497.23px;font-size:28.56px;color:#ccccdc;-webkit-text-stroke:0.34px #ccccdc;letter-spacing:0.04px;">1.87 µs</span>
<div style="left:2329.1px;top:1551.1px;width:3.8px;height:67.2px;background:#111217;"></div>
<div style="left:2563.2px;top:1551.1px;width:3.8px;height:67.2px;background:#111217;"></div>
<div style="left:2081px;top:1618.3999999999999px;width:664px;height:3.8px;background:#111217;"></div>
<span class="t" style="left:2110.17px;top:1568.33px;font-size:28.56px;color:#ccccdc;-webkit-text-stroke:0.34px #ccccdc;letter-spacing:0.14px;">author</span>
<span class="t" style="left:2362.67px;top:1568.33px;font-size:28.56px;color:#ccccdc;-webkit-text-stroke:0.34px #ccccdc;letter-spacing:-0.21px;">Book</span>
<span class="t" style="left:2619.17px;top:1568.33px;font-size:28.56px;color:#ccccdc;-webkit-text-stroke:0.34px #ccccdc;letter-spacing:0.04px;">1.81 µs</span>
</section></main>
</body></html>
